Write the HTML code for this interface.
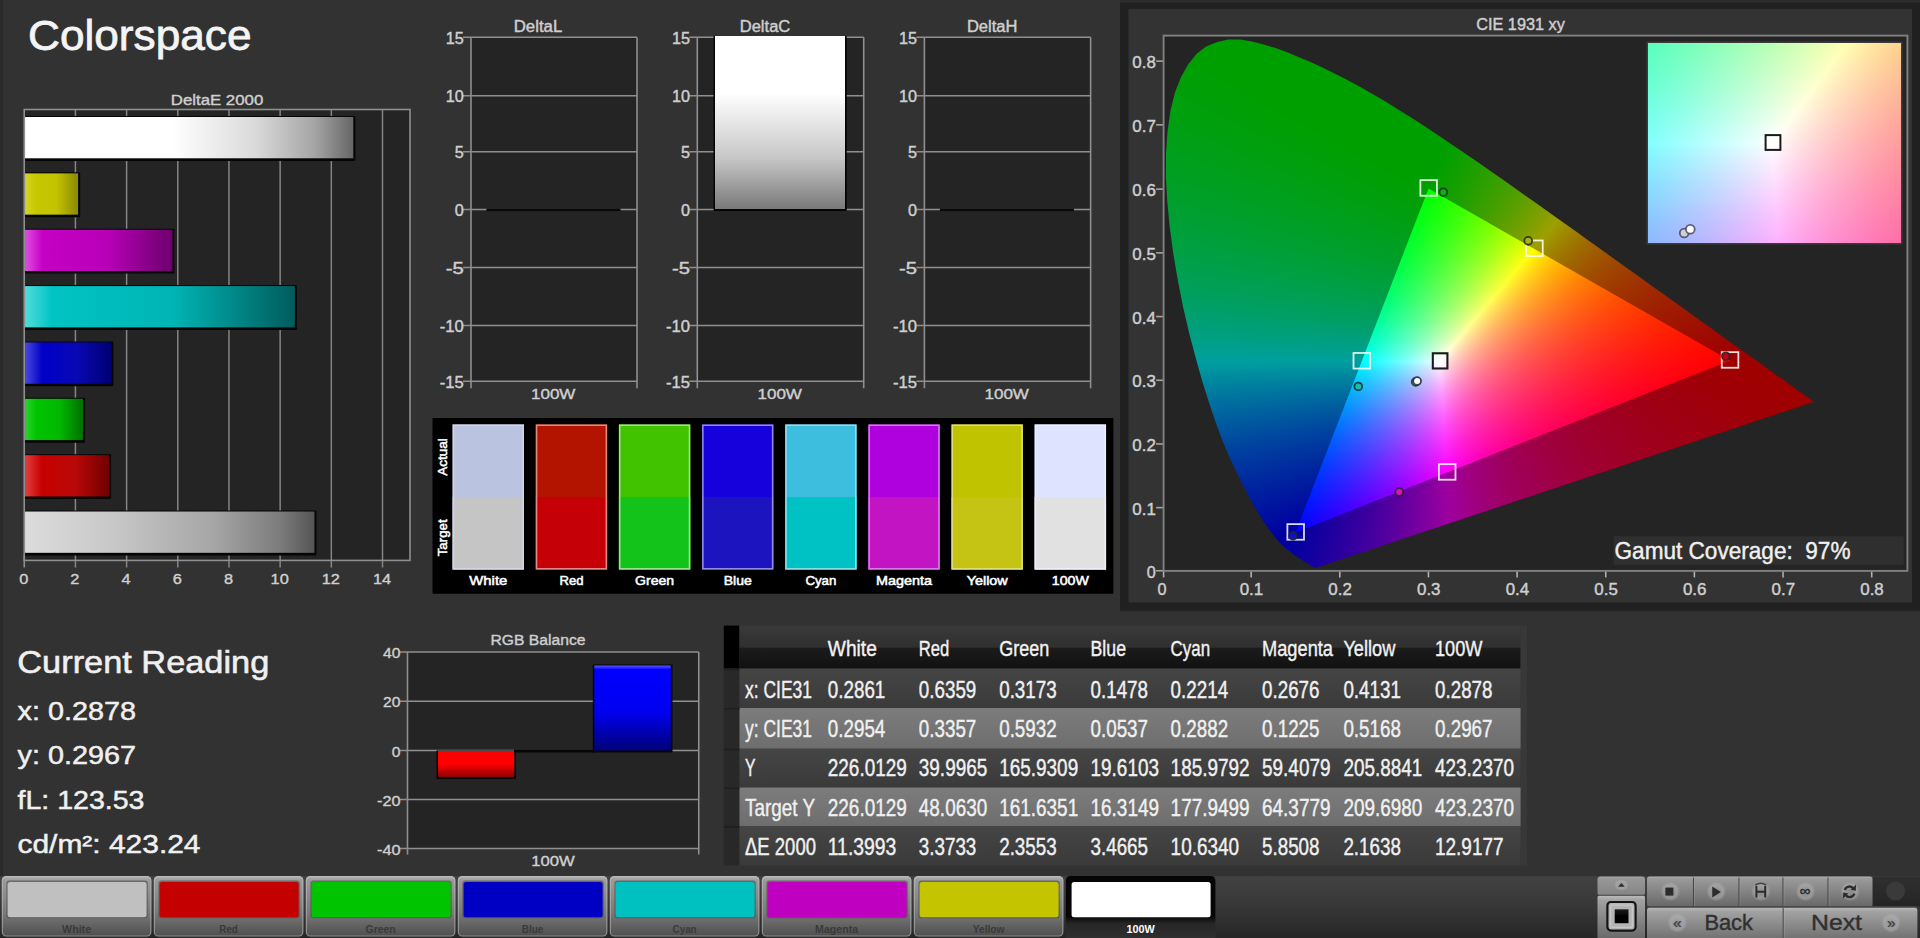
<!DOCTYPE html>
<html lang="en"><head><meta charset="utf-8"><title>Colorspace</title>
<style>
html,body{margin:0;padding:0;background:#323232;}
body{width:1920px;height:938px;overflow:hidden;position:relative;font-family:"Liberation Sans", sans-serif;}
svg{position:absolute;left:0;top:0;font-family:"Liberation Sans", sans-serif;}
.cie{position:absolute;background:#000;isolation:isolate;overflow:hidden}
.cie div{position:absolute;left:0;top:0;width:100%;height:100%;background-blend-mode:darken}
.cie .s{mix-blend-mode:screen}
#c1{left:1164px;top:37px;width:742px;height:533px;clip-path:polygon(152.8px 530.6px,152.8px 530.6px,152.7px 530.6px,152.6px 530.6px,152.4px 530.7px,152.3px 530.7px,152.1px 530.7px,152.0px 530.7px,151.8px 530.7px,151.5px 530.7px,151.2px 530.7px,150.8px 530.6px,150.4px 530.5px,150.1px 530.4px,149.8px 530.2px,149.5px 530.1px,149.1px 529.9px,148.7px 529.6px,148.2px 529.4px,147.7px 529.0px,147.1px 528.7px,146.5px 528.3px,145.8px 527.8px,145.0px 527.3px,144.2px 526.8px,143.4px 526.2px,142.4px 525.6px,141.3px 525.0px,140.1px 524.2px,138.8px 523.4px,137.3px 522.5px,135.8px 521.5px,134.1px 520.5px,132.4px 519.3px,130.4px 518.0px,128.4px 516.5px,126.2px 514.8px,123.8px 513.0px,121.4px 510.9px,118.6px 508.3px,115.5px 505.2px,112.2px 501.4px,108.5px 496.9px,104.6px 491.7px,100.3px 485.7px,95.7px 478.5px,90.6px 470.0px,85.3px 460.4px,79.4px 449.2px,73.1px 436.4px,66.3px 422.1px,59.4px 405.9px,52.5px 387.7px,45.6px 367.6px,38.7px 345.8px,32.0px 322.1px,25.3px 296.8px,19.3px 270.9px,14.0px 244.3px,9.4px 217.2px,5.8px 190.8px,3.3px 165.1px,1.9px 140.1px,2.0px 116.6px,3.5px 94.6px,6.4px 74.0px,10.8px 55.9px,16.9px 40.2px,24.4px 26.9px,33.0px 16.5px,42.6px 9.3px,53.3px 4.9px,64.4px 2.6px,75.8px 2.5px,87.8px 4.6px,99.7px 7.5px,111.7px 11.1px,123.8px 15.6px,135.6px 20.4px,147.1px 25.3px,158.4px 30.5px,169.5px 35.9px,180.5px 41.5px,191.3px 47.3px,202.0px 53.3px,212.8px 59.5px,223.5px 65.8px,234.1px 72.4px,244.7px 79.0px,255.3px 85.8px,265.9px 92.8px,276.4px 99.8px,287.0px 106.9px,297.5px 114.0px,308.1px 121.3px,318.7px 128.6px,329.3px 135.9px,339.8px 143.3px,350.3px 150.8px,360.8px 158.2px,371.3px 165.6px,381.8px 173.0px,392.2px 180.4px,402.5px 187.8px,412.8px 195.1px,423.0px 202.4px,433.0px 209.6px,443.0px 216.7px,452.8px 223.8px,462.5px 230.7px,472.1px 237.6px,481.5px 244.3px,490.7px 250.9px,499.7px 257.3px,508.4px 263.5px,516.9px 269.6px,525.1px 275.5px,533.0px 281.2px,540.4px 286.5px,547.5px 291.6px,554.3px 296.5px,560.9px 301.2px,567.2px 305.7px,573.1px 309.9px,578.7px 313.9px,583.9px 317.5px,588.7px 321.0px,593.3px 324.2px,597.5px 327.3px,601.4px 330.1px,605.0px 332.7px,608.4px 335.1px,611.5px 337.4px,614.4px 339.4px,617.1px 341.3px,619.6px 343.1px,621.9px 344.8px,624.0px 346.3px,626.1px 347.7px,628.0px 349.1px,629.8px 350.4px,631.5px 351.6px,633.0px 352.8px,634.5px 353.8px,635.9px 354.8px,637.2px 355.7px,638.4px 356.5px,639.4px 357.3px,640.4px 358.0px,641.3px 358.6px,642.1px 359.2px,642.8px 359.7px,643.5px 360.2px,644.1px 360.7px,644.7px 361.1px,645.1px 361.4px,645.6px 361.8px,646.2px 362.2px,646.9px 362.6px,647.4px 363.0px,647.9px 363.4px,648.3px 363.6px,648.7px 363.9px,649.1px 364.2px,649.5px 364.5px,649.8px 364.8px)}
#c1 .k0{background:conic-gradient(from 220.088deg at 131.47px 495.53px,#000000 0.00deg,#000000 161.05deg,#040000 161.52deg,#080000 161.99deg,#0d0000 162.46deg,#110000 162.94deg,#160000 163.41deg,#1a0000 163.88deg,#1f0000 164.36deg,#240000 164.83deg,#280000 165.30deg,#2d0000 165.77deg,#320000 166.25deg,#370000 166.72deg,#3d0000 167.19deg,#420000 167.66deg,#470000 168.14deg,#4d0000 168.61deg,#520000 169.08deg,#580000 169.55deg,#5e0000 170.03deg,#640000 170.50deg,#6a0000 170.97deg,#700000 171.45deg,#760000 171.92deg,#7d0000 172.39deg,#830000 172.86deg,#8a0000 173.34deg,#910000 173.81deg,#980000 174.28deg,#a00000 174.75deg,#a70000 175.23deg,#af0000 175.70deg,#b70000 176.17deg,#bf0000 176.64deg,#c70000 177.12deg,#d00000 177.59deg,#d80000 178.06deg,#e10000 178.53deg,#eb0000 179.01deg,#f40000 179.48deg,#fe0000 179.95deg,#ff0000 180.43deg,#ff0000 360.00deg),conic-gradient(from 356.269deg at 264.45px 151.55px,#ff0000 0.00deg,#ff0000 179.62deg,#fa0000 180.44deg,#f00000 181.25deg,#e60000 182.07deg,#dc0000 182.88deg,#d20000 183.70deg,#c90000 184.51deg,#c00000 185.32deg,#b70000 186.14deg,#ae0000 186.95deg,#a50000 187.77deg,#9c0000 188.58deg,#940000 189.40deg,#8b0000 190.21deg,#830000 191.02deg,#7b0000 191.84deg,#730000 192.65deg,#6a0000 193.47deg,#620000 194.28deg,#5a0000 195.10deg,#530000 195.91deg,#4b0000 196.72deg,#430000 197.54deg,#3b0000 198.35deg,#340000 199.17deg,#2c0000 199.98deg,#250000 200.80deg,#1d0000 201.61deg,#160000 202.42deg,#0f0000 203.24deg,#070000 204.05deg,#000000 204.87deg,#000000 360.00deg)}
#c1 .k1{background:conic-gradient(from 220.088deg at 131.47px 495.53px,#00ff00 0.00deg,#00ff00 179.95deg,#00f600 180.43deg,#00ed00 180.90deg,#00e400 181.37deg,#00db00 181.84deg,#00d300 182.32deg,#00cb00 182.79deg,#00c400 183.26deg,#00bc00 183.73deg,#00b500 184.21deg,#00af00 184.68deg,#00a800 185.15deg,#00a200 185.62deg,#009c00 186.10deg,#009600 186.57deg,#009100 187.04deg,#008b00 187.51deg,#008600 187.99deg,#008100 188.46deg,#007c00 188.93deg,#007700 189.41deg,#007300 189.88deg,#006e00 190.35deg,#006a00 190.82deg,#006500 191.30deg,#006100 191.77deg,#005d00 192.24deg,#005900 192.71deg,#005600 193.19deg,#005200 193.66deg,#004e00 194.13deg,#004b00 194.60deg,#004700 195.08deg,#004400 195.55deg,#004100 196.02deg,#003e00 196.49deg,#003b00 196.97deg,#003800 197.44deg,#003500 197.91deg,#003200 198.39deg,#002f00 198.86deg,#002c00 199.33deg,#002900 199.80deg,#002700 200.28deg,#002400 200.75deg,#002100 201.22deg,#001f00 201.69deg,#001c00 202.17deg,#001a00 202.64deg,#001800 203.11deg,#001500 203.58deg,#001300 204.06deg,#001100 204.53deg,#000f00 205.00deg,#000c00 205.48deg,#000a00 205.95deg,#000800 206.42deg,#000600 206.89deg,#000400 207.37deg,#000200 207.84deg,#000000 208.31deg,#000000 360.00deg),conic-gradient(from 89.874deg at 565.86px 323.54px,#000000 0.00deg,#000000 158.53deg,#000400 159.04deg,#000800 159.55deg,#000c00 160.06deg,#001000 160.58deg,#001500 161.09deg,#001900 161.60deg,#001d00 162.12deg,#002200 162.63deg,#002600 163.14deg,#002b00 163.66deg,#003000 164.17deg,#003400 164.68deg,#003900 165.20deg,#003e00 165.71deg,#004300 166.22deg,#004800 166.73deg,#004e00 167.25deg,#005300 167.76deg,#005800 168.27deg,#005e00 168.79deg,#006400 169.30deg,#006900 169.81deg,#006f00 170.33deg,#007500 170.84deg,#007c00 171.35deg,#008200 171.87deg,#008800 172.38deg,#008f00 172.89deg,#009600 173.41deg,#009d00 173.92deg,#00a400 174.43deg,#00ab00 174.94deg,#00b300 175.46deg,#00ba00 175.97deg,#00c200 176.48deg,#00ca00 177.00deg,#00d300 177.51deg,#00db00 178.02deg,#00e400 178.54deg,#00ed00 179.05deg,#00f700 179.56deg,#00ff00 180.08deg,#00ff00 360.00deg)}
#c1 .k2{background:conic-gradient(from 89.874deg at 565.86px 323.54px,#0000ff 0.00deg,#0000ff 179.56deg,#0000fe 180.08deg,#0000f4 180.59deg,#0000eb 181.10deg,#0000e2 181.61deg,#0000da 182.13deg,#0000d2 182.64deg,#0000ca 183.15deg,#0000c3 183.67deg,#0000bc 184.18deg,#0000b5 184.69deg,#0000ae 185.21deg,#0000a8 185.72deg,#0000a2 186.23deg,#00009c 186.75deg,#000096 187.26deg,#000090 187.77deg,#00008b 188.29deg,#000086 188.80deg,#000081 189.31deg,#00007c 189.82deg,#000077 190.34deg,#000072 190.85deg,#00006e 191.36deg,#000069 191.88deg,#000065 192.39deg,#000061 192.90deg,#00005d 193.42deg,#000059 193.93deg,#000055 194.44deg,#000051 194.96deg,#00004d 195.47deg,#00004a 195.98deg,#000046 196.49deg,#000043 197.01deg,#000040 197.52deg,#00003c 198.03deg,#000039 198.55deg,#000036 199.06deg,#000033 199.57deg,#000030 200.09deg,#00002d 200.60deg,#00002a 201.11deg,#000027 201.63deg,#000024 202.14deg,#000022 202.65deg,#00001f 203.17deg,#00001c 203.68deg,#00001a 204.19deg,#000017 204.70deg,#000015 205.22deg,#000012 205.73deg,#000010 206.24deg,#00000e 206.76deg,#00000b 207.27deg,#000009 207.78deg,#000007 208.30deg,#000004 208.81deg,#000002 209.32deg,#000000 209.84deg,#000000 360.00deg),conic-gradient(from 356.269deg at 264.45px 151.55px,#000000 0.00deg,#000000 123.44deg,#000002 124.26deg,#000004 125.07deg,#000006 125.88deg,#000007 126.70deg,#000009 127.51deg,#00000b 128.33deg,#00000d 129.14deg,#00000f 129.96deg,#000011 130.77deg,#000013 131.58deg,#000015 132.40deg,#000017 133.21deg,#000019 134.03deg,#00001b 134.84deg,#00001d 135.66deg,#00001f 136.47deg,#000021 137.28deg,#000023 138.10deg,#000026 138.91deg,#000028 139.73deg,#00002a 140.54deg,#00002c 141.35deg,#00002e 142.17deg,#000031 142.98deg,#000033 143.80deg,#000035 144.61deg,#000038 145.43deg,#00003a 146.24deg,#00003d 147.05deg,#00003f 147.87deg,#000042 148.68deg,#000045 149.50deg,#000047 150.31deg,#00004a 151.13deg,#00004d 151.94deg,#000050 152.75deg,#000053 153.57deg,#000056 154.38deg,#000059 155.20deg,#00005c 156.01deg,#00005f 156.83deg,#000062 157.64deg,#000066 158.45deg,#000069 159.27deg,#00006d 160.08deg,#000071 160.90deg,#000074 161.71deg,#000078 162.53deg,#00007c 163.34deg,#000081 164.15deg,#000085 164.97deg,#000089 165.78deg,#00008e 166.60deg,#000093 167.41deg,#000098 168.23deg,#00009d 169.04deg,#0000a2 169.85deg,#0000a8 170.67deg,#0000ae 171.48deg,#0000b4 172.30deg,#0000ba 173.11deg,#0000c1 173.93deg,#0000c8 174.74deg,#0000cf 175.55deg,#0000d7 176.37deg,#0000df 177.18deg,#0000e8 178.00deg,#0000f1 178.81deg,#0000fa 179.62deg,#0000ff 180.44deg,#0000ff 360.00deg)}
#c1 .dk{background:rgba(0,0,0,0.375);clip-path:path(evenodd,"M0 0H742V533H0Z M565.9 323.5L264.5 151.6L131.5 495.5Z")}
#c2{left:1648.3px;top:43.0px;width:252.5px;height:200.3px;box-shadow:0 0 0 1.5px #3c3c3c}
#c2 .k0{background:conic-gradient(from 216.810deg at -415.63px 821.50px,#000000 0.00deg,#000000 162.16deg,#010000 162.28deg,#020000 162.39deg,#030000 162.51deg,#050000 162.63deg,#060000 162.75deg,#070000 162.86deg,#080000 162.98deg,#090000 163.10deg,#0a0000 163.22deg,#0c0000 163.33deg,#0d0000 163.45deg,#0e0000 163.57deg,#0f0000 163.69deg,#100000 163.80deg,#120000 163.92deg,#130000 164.04deg,#140000 164.16deg,#150000 164.27deg,#160000 164.39deg,#180000 164.51deg,#190000 164.63deg,#1a0000 164.74deg,#1b0000 164.86deg,#1d0000 164.98deg,#1e0000 165.10deg,#1f0000 165.21deg,#200000 165.33deg,#220000 165.45deg,#230000 165.57deg,#240000 165.68deg,#260000 165.80deg,#270000 165.92deg,#280000 166.04deg,#290000 166.15deg,#2b0000 166.27deg,#2c0000 166.39deg,#2d0000 166.51deg,#2f0000 166.63deg,#300000 166.74deg,#310000 166.86deg,#330000 166.98deg,#340000 167.10deg,#350000 167.21deg,#370000 167.33deg,#380000 167.45deg,#3a0000 167.57deg,#3b0000 167.68deg,#3c0000 167.80deg,#3e0000 167.92deg,#3f0000 168.04deg,#410000 168.15deg,#420000 168.27deg,#430000 168.39deg,#450000 168.51deg,#460000 168.62deg,#480000 168.74deg,#490000 168.86deg,#4b0000 168.98deg,#4c0000 169.09deg,#4e0000 169.21deg,#4f0000 169.33deg,#510000 169.45deg,#520000 169.56deg,#540000 169.68deg,#550000 169.80deg,#570000 169.92deg,#580000 170.03deg,#5a0000 170.15deg,#5b0000 170.27deg,#5d0000 170.39deg,#5e0000 170.50deg,#600000 170.62deg,#610000 170.74deg,#630000 170.86deg,#650000 170.98deg,#660000 171.09deg,#680000 171.21deg,#690000 171.33deg,#6b0000 171.45deg,#6d0000 171.56deg,#6e0000 171.68deg,#700000 171.80deg,#720000 171.92deg,#730000 172.03deg,#750000 172.15deg,#770000 172.27deg,#780000 172.39deg,#7a0000 172.50deg,#7c0000 172.62deg,#7d0000 172.74deg,#7f0000 172.86deg,#810000 172.97deg,#830000 173.09deg,#840000 173.21deg,#860000 173.33deg,#880000 173.44deg,#8a0000 173.56deg,#8c0000 173.68deg,#8d0000 173.80deg,#8f0000 173.91deg,#910000 174.03deg,#930000 174.15deg,#950000 174.27deg,#970000 174.38deg,#980000 174.50deg,#9a0000 174.62deg,#9c0000 174.74deg,#9e0000 174.85deg,#a00000 174.97deg,#a20000 175.09deg,#a40000 175.21deg,#a60000 175.33deg,#a80000 175.44deg,#aa0000 175.56deg,#ac0000 175.68deg,#ae0000 175.80deg,#b00000 175.91deg,#b20000 176.03deg,#b40000 176.15deg,#b60000 176.27deg,#b80000 176.38deg,#ba0000 176.50deg,#bc0000 176.62deg,#be0000 176.74deg,#c10000 176.85deg,#c30000 176.97deg,#c50000 177.09deg,#c70000 177.21deg,#c90000 177.32deg,#cb0000 177.44deg,#ce0000 177.56deg,#d00000 177.68deg,#d20000 177.79deg,#d40000 177.91deg,#d70000 178.03deg,#d90000 178.15deg,#db0000 178.26deg,#dd0000 178.38deg,#e00000 178.50deg,#e20000 178.62deg,#e40000 178.73deg,#e70000 178.85deg,#e90000 178.97deg,#ec0000 179.09deg,#ee0000 179.20deg,#f10000 179.32deg,#f30000 179.44deg,#f50000 179.56deg,#f80000 179.68deg,#fb0000 179.79deg,#fd0000 179.91deg,#ff0000 180.03deg,#ff0000 360.00deg),conic-gradient(from 356.681deg at 82.52px -627.86px,#ff0000 0.00deg,#ff0000 179.98deg,#fd0000 180.17deg,#fa0000 180.36deg,#f70000 180.55deg,#f50000 180.74deg,#f20000 180.93deg,#ef0000 181.12deg,#ed0000 181.31deg,#ea0000 181.50deg,#e80000 181.69deg,#e50000 181.88deg,#e30000 182.07deg,#e00000 182.26deg,#dd0000 182.45deg,#db0000 182.65deg,#d80000 182.84deg,#d60000 183.03deg,#d30000 183.22deg,#d10000 183.41deg,#ce0000 183.60deg,#cc0000 183.79deg,#ca0000 183.98deg,#c70000 184.17deg,#c50000 184.36deg,#c20000 184.55deg,#c00000 184.74deg,#bd0000 184.93deg,#bb0000 185.12deg,#b90000 185.32deg,#b60000 185.51deg,#b40000 185.70deg,#b20000 185.89deg,#af0000 186.08deg,#ad0000 186.27deg,#ab0000 186.46deg,#a80000 186.65deg,#a60000 186.84deg,#a40000 187.03deg,#a10000 187.22deg,#9f0000 187.41deg,#9d0000 187.60deg,#9a0000 187.79deg,#980000 187.98deg,#960000 188.18deg,#940000 188.37deg,#910000 188.56deg,#8f0000 188.75deg,#8d0000 188.94deg,#8b0000 189.13deg,#890000 189.32deg,#860000 189.51deg,#840000 189.70deg,#820000 189.89deg,#800000 190.08deg,#7e0000 190.27deg,#7c0000 190.46deg,#790000 190.65deg,#770000 190.85deg,#750000 191.04deg,#730000 191.23deg,#710000 191.42deg,#6f0000 191.61deg,#6d0000 191.80deg,#6a0000 191.99deg,#680000 192.18deg,#660000 192.37deg,#640000 192.56deg,#620000 192.75deg,#600000 192.94deg,#5e0000 193.13deg,#5c0000 193.32deg,#5a0000 193.51deg,#580000 193.71deg,#560000 193.90deg,#540000 194.09deg,#520000 194.28deg,#500000 194.47deg,#4e0000 194.66deg,#4b0000 194.85deg,#490000 195.04deg,#470000 195.23deg,#450000 195.42deg,#430000 195.61deg,#410000 195.80deg,#3f0000 195.99deg,#3d0000 196.18deg,#3b0000 196.38deg,#390000 196.57deg,#380000 196.76deg,#360000 196.95deg,#340000 197.14deg,#320000 197.33deg,#300000 197.52deg,#2e0000 197.71deg,#2c0000 197.90deg,#2a0000 198.09deg,#280000 198.28deg,#260000 198.47deg,#240000 198.66deg,#220000 198.85deg,#200000 199.04deg,#1e0000 199.24deg,#1c0000 199.43deg,#1a0000 199.62deg,#180000 199.81deg,#170000 200.00deg,#150000 200.19deg,#130000 200.38deg,#110000 200.57deg,#0f0000 200.76deg,#0d0000 200.95deg,#0b0000 201.14deg,#090000 201.33deg,#070000 201.52deg,#060000 201.71deg,#040000 201.91deg,#020000 202.10deg,#000000 202.29deg,#000000 360.00deg)}
#c2 .k1{background:conic-gradient(from 216.810deg at -415.63px 821.50px,#00ff00 0.00deg,#00ff00 179.91deg,#00fe00 180.03deg,#00fc00 180.15deg,#00f900 180.26deg,#00f700 180.38deg,#00f400 180.50deg,#00f200 180.62deg,#00f000 180.73deg,#00ed00 180.85deg,#00eb00 180.97deg,#00e900 181.09deg,#00e600 181.20deg,#00e400 181.32deg,#00e200 181.44deg,#00e000 181.56deg,#00de00 181.67deg,#00db00 181.79deg,#00d900 181.91deg,#00d700 182.03deg,#00d500 182.14deg,#00d300 182.26deg,#00d100 182.38deg,#00cf00 182.50deg,#00cd00 182.61deg,#00cb00 182.73deg,#00c900 182.85deg,#00c700 182.97deg,#00c500 183.08deg,#00c300 183.20deg,#00c200 183.32deg,#00c000 183.44deg,#00be00 183.55deg,#00bc00 183.67deg,#00ba00 183.79deg,#00b900 183.91deg,#00b700 184.03deg,#00b500 184.14deg,#00b300 184.26deg,#00b200 184.38deg,#00b000 184.50deg,#00ae00 184.61deg,#00ad00 184.73deg,#00ab00 184.85deg,#00aa00 184.97deg,#00a800 185.08deg,#00a600 185.20deg,#00a500 185.32deg,#00a300 185.44deg,#00a200 185.55deg,#00a000 185.67deg,#009f00 185.79deg,#009d00 185.91deg,#009c00 186.02deg,#009a00 186.14deg,#009900 186.26deg,#009700 186.38deg,#009600 186.49deg,#009500 186.61deg,#009300 186.73deg,#009200 186.85deg,#009000 186.96deg,#008f00 187.08deg,#008e00 187.20deg,#008c00 187.32deg,#008b00 187.43deg,#008a00 187.55deg,#008800 187.67deg,#008700 187.79deg,#008600 187.90deg,#008500 188.02deg,#008300 188.14deg,#008200 188.26deg,#008100 188.38deg,#008000 188.49deg,#007e00 188.61deg,#007d00 188.73deg,#007c00 188.85deg,#007b00 188.96deg,#007a00 189.08deg,#007800 189.20deg,#007700 189.32deg,#007600 189.43deg,#007500 189.55deg,#007400 189.67deg,#007300 189.79deg,#007200 189.90deg,#007100 190.02deg,#006f00 190.14deg,#006e00 190.26deg,#006d00 190.37deg,#006c00 190.49deg,#006b00 190.61deg,#006a00 190.73deg,#006900 190.84deg,#006800 190.96deg,#006700 191.08deg,#006600 191.20deg,#006500 191.31deg,#006400 191.43deg,#006300 191.55deg,#006200 191.67deg,#006100 191.78deg,#006000 191.90deg,#005f00 192.02deg,#005e00 192.14deg,#005d00 192.25deg,#005c00 192.37deg,#005b00 192.49deg,#005a00 192.61deg,#005900 192.73deg,#005800 192.84deg,#005700 192.96deg,#005700 193.08deg,#005600 193.20deg,#005500 193.31deg,#005400 193.43deg,#005300 193.55deg,#005200 193.67deg,#005100 193.78deg,#005000 193.90deg,#004f00 194.02deg,#004f00 194.14deg,#004e00 194.25deg,#004d00 194.37deg,#004c00 194.49deg,#004b00 194.61deg,#004a00 194.72deg,#004a00 194.84deg,#004900 194.96deg,#004800 195.08deg,#004700 195.19deg,#004600 195.31deg,#004500 195.43deg,#004500 195.55deg,#004400 195.66deg,#004300 195.78deg,#004200 195.90deg,#004200 196.02deg,#004100 196.13deg,#004000 196.25deg,#003f00 196.37deg,#003e00 196.49deg,#003e00 196.61deg,#003d00 196.72deg,#003c00 196.84deg,#003b00 196.96deg,#003b00 197.08deg,#003a00 197.19deg,#003900 197.31deg,#003900 197.43deg,#003800 197.55deg,#003700 197.66deg,#003600 197.78deg,#003600 197.90deg,#003500 198.02deg,#003400 198.13deg,#003400 198.25deg,#003300 198.37deg,#003200 198.49deg,#003200 198.60deg,#003100 198.72deg,#003000 198.84deg,#002f00 198.96deg,#002f00 199.07deg,#002e00 199.19deg,#002e00 199.31deg,#002d00 199.43deg,#002c00 199.54deg,#002c00 199.66deg,#002b00 199.78deg,#002a00 199.90deg,#002a00 200.01deg,#002900 200.13deg,#002800 200.25deg,#002800 200.37deg,#002700 200.48deg,#002600 200.60deg,#002600 200.72deg,#002500 200.84deg,#002500 200.96deg,#002400 201.07deg,#002300 201.19deg,#002300 201.31deg,#002200 201.43deg,#002200 201.54deg,#002100 201.66deg,#002000 201.78deg,#002000 201.90deg,#001f00 202.01deg,#001f00 202.13deg,#001e00 202.25deg,#001d00 202.37deg,#001d00 202.48deg,#001c00 202.60deg,#001c00 202.72deg,#001b00 202.84deg,#001b00 202.95deg,#001a00 203.07deg,#001900 203.19deg,#001900 203.31deg,#001800 203.42deg,#001800 203.54deg,#001700 203.66deg,#001700 203.78deg,#001600 203.89deg,#001600 204.01deg,#001500 204.13deg,#001500 204.25deg,#001400 204.36deg,#001400 204.48deg,#001300 204.60deg,#001200 204.72deg,#001200 204.83deg,#001100 204.95deg,#001100 205.07deg,#001000 205.19deg,#001000 205.31deg,#000f00 205.42deg,#000f00 205.54deg,#000e00 205.66deg,#000e00 205.78deg,#000d00 205.89deg,#000d00 206.01deg,#000c00 206.13deg,#000c00 206.25deg,#000b00 206.36deg,#000b00 206.48deg,#000a00 206.60deg,#000a00 206.72deg,#000900 206.83deg,#000900 206.95deg,#000800 207.07deg,#000800 207.19deg,#000700 207.30deg,#000700 207.42deg,#000600 207.54deg,#000600 207.77deg,#000500 207.89deg,#000500 208.01deg,#000400 208.13deg,#000400 208.24deg,#000300 208.36deg,#000300 208.48deg,#000200 208.60deg,#000200 208.71deg,#000100 208.83deg,#000100 208.95deg,#000000 209.07deg,#000000 360.00deg),conic-gradient(from 89.859deg at 1211.66px 96.82px,#000000 0.00deg,#000000 156.14deg,#000100 156.28deg,#000200 156.42deg,#000300 156.56deg,#000400 156.70deg,#000500 156.85deg,#000600 156.99deg,#000700 157.13deg,#000800 157.27deg,#000900 157.41deg,#000a00 157.55deg,#000b00 157.70deg,#000c00 157.84deg,#000d00 157.98deg,#000e00 158.12deg,#001000 158.26deg,#001100 158.40deg,#001200 158.55deg,#001300 158.69deg,#001400 158.83deg,#001500 158.97deg,#001600 159.11deg,#001700 159.26deg,#001800 159.40deg,#001900 159.54deg,#001a00 159.68deg,#001c00 159.82deg,#001d00 159.96deg,#001e00 160.11deg,#001f00 160.25deg,#002000 160.39deg,#002100 160.53deg,#002200 160.67deg,#002300 160.81deg,#002400 160.96deg,#002600 161.10deg,#002700 161.24deg,#002800 161.38deg,#002900 161.52deg,#002a00 161.66deg,#002b00 161.81deg,#002d00 161.95deg,#002e00 162.09deg,#002f00 162.23deg,#003000 162.37deg,#003100 162.52deg,#003300 162.66deg,#003400 162.80deg,#003500 162.94deg,#003600 163.08deg,#003700 163.22deg,#003900 163.37deg,#003a00 163.51deg,#003b00 163.65deg,#003c00 163.79deg,#003e00 163.93deg,#003f00 164.07deg,#004000 164.22deg,#004100 164.36deg,#004300 164.50deg,#004400 164.64deg,#004500 164.78deg,#004600 164.92deg,#004800 165.07deg,#004900 165.21deg,#004a00 165.35deg,#004c00 165.49deg,#004d00 165.63deg,#004e00 165.78deg,#004f00 165.92deg,#005100 166.06deg,#005200 166.20deg,#005300 166.34deg,#005500 166.48deg,#005600 166.63deg,#005800 166.77deg,#005900 166.91deg,#005a00 167.05deg,#005c00 167.19deg,#005d00 167.33deg,#005e00 167.48deg,#006000 167.62deg,#006100 167.76deg,#006300 167.90deg,#006400 168.04deg,#006600 168.18deg,#006700 168.33deg,#006800 168.47deg,#006a00 168.61deg,#006b00 168.75deg,#006d00 168.89deg,#006e00 169.04deg,#007000 169.18deg,#007100 169.32deg,#007300 169.46deg,#007400 169.60deg,#007600 169.74deg,#007700 169.89deg,#007900 170.03deg,#007a00 170.17deg,#007c00 170.31deg,#007d00 170.45deg,#007f00 170.59deg,#008000 170.74deg,#008200 170.88deg,#008400 171.02deg,#008500 171.16deg,#008700 171.30deg,#008800 171.44deg,#008a00 171.59deg,#008c00 171.73deg,#008d00 171.87deg,#008f00 172.01deg,#009100 172.15deg,#009200 172.30deg,#009400 172.44deg,#009600 172.58deg,#009700 172.72deg,#009900 172.86deg,#009b00 173.00deg,#009d00 173.15deg,#009e00 173.29deg,#00a000 173.43deg,#00a200 173.57deg,#00a400 173.71deg,#00a500 173.85deg,#00a700 174.00deg,#00a900 174.14deg,#00ab00 174.28deg,#00ad00 174.42deg,#00ae00 174.56deg,#00b000 174.70deg,#00b200 174.85deg,#00b400 174.99deg,#00b600 175.13deg,#00b800 175.27deg,#00ba00 175.41deg,#00bc00 175.56deg,#00be00 175.70deg,#00bf00 175.84deg,#00c100 175.98deg,#00c300 176.12deg,#00c500 176.26deg,#00c700 176.41deg,#00c900 176.55deg,#00cb00 176.69deg,#00cd00 176.83deg,#00d000 176.97deg,#00d200 177.11deg,#00d400 177.26deg,#00d600 177.40deg,#00d800 177.54deg,#00da00 177.68deg,#00dc00 177.82deg,#00de00 177.97deg,#00e000 178.11deg,#00e300 178.25deg,#00e500 178.39deg,#00e700 178.53deg,#00e900 178.67deg,#00ec00 178.82deg,#00ee00 178.96deg,#00f000 179.10deg,#00f200 179.24deg,#00f500 179.38deg,#00f700 179.52deg,#00f900 179.67deg,#00fc00 179.81deg,#00fe00 179.95deg,#00ff00 180.09deg,#00ff00 360.00deg)}
#c2 .k2{background:conic-gradient(from 89.859deg at 1211.66px 96.82px,#0000ff 0.00deg,#0000ff 179.95deg,#0000fd 180.09deg,#0000fb 180.23deg,#0000f9 180.37deg,#0000f6 180.52deg,#0000f4 180.66deg,#0000f2 180.80deg,#0000f0 180.94deg,#0000ed 181.08deg,#0000eb 181.23deg,#0000e9 181.37deg,#0000e7 181.51deg,#0000e5 181.65deg,#0000e3 181.79deg,#0000e1 181.93deg,#0000de 182.08deg,#0000dc 182.22deg,#0000da 182.36deg,#0000d8 182.50deg,#0000d6 182.64deg,#0000d4 182.78deg,#0000d2 182.93deg,#0000d1 183.07deg,#0000cf 183.21deg,#0000cd 183.35deg,#0000cb 183.49deg,#0000c9 183.63deg,#0000c7 183.78deg,#0000c5 183.92deg,#0000c4 184.06deg,#0000c2 184.20deg,#0000c0 184.34deg,#0000be 184.49deg,#0000bd 184.63deg,#0000bb 184.77deg,#0000b9 184.91deg,#0000b7 185.05deg,#0000b6 185.19deg,#0000b4 185.34deg,#0000b2 185.48deg,#0000b1 185.62deg,#0000af 185.76deg,#0000ae 185.90deg,#0000ac 186.04deg,#0000aa 186.19deg,#0000a9 186.33deg,#0000a7 186.47deg,#0000a6 186.61deg,#0000a4 186.75deg,#0000a3 186.89deg,#0000a1 187.04deg,#0000a0 187.18deg,#00009e 187.32deg,#00009d 187.46deg,#00009b 187.60deg,#00009a 187.75deg,#000099 187.89deg,#000097 188.03deg,#000096 188.17deg,#000094 188.31deg,#000093 188.45deg,#000092 188.60deg,#000090 188.74deg,#00008f 188.88deg,#00008d 189.02deg,#00008c 189.16deg,#00008b 189.30deg,#00008a 189.45deg,#000088 189.59deg,#000087 189.73deg,#000086 189.87deg,#000084 190.01deg,#000083 190.15deg,#000082 190.30deg,#000081 190.44deg,#00007f 190.58deg,#00007e 190.72deg,#00007d 190.86deg,#00007c 191.01deg,#00007b 191.15deg,#000079 191.29deg,#000078 191.43deg,#000077 191.57deg,#000076 191.71deg,#000075 191.86deg,#000074 192.00deg,#000072 192.14deg,#000071 192.28deg,#000070 192.42deg,#00006f 192.56deg,#00006e 192.71deg,#00006d 192.85deg,#00006c 192.99deg,#00006b 193.13deg,#00006a 193.27deg,#000068 193.41deg,#000067 193.56deg,#000066 193.70deg,#000065 193.84deg,#000064 193.98deg,#000063 194.12deg,#000062 194.27deg,#000061 194.41deg,#000060 194.55deg,#00005f 194.69deg,#00005e 194.83deg,#00005d 194.97deg,#00005c 195.12deg,#00005b 195.26deg,#00005a 195.40deg,#000059 195.54deg,#000058 195.68deg,#000057 195.82deg,#000056 195.97deg,#000055 196.11deg,#000054 196.25deg,#000053 196.39deg,#000052 196.53deg,#000051 196.68deg,#000051 196.82deg,#000050 196.96deg,#00004f 197.10deg,#00004e 197.24deg,#00004d 197.38deg,#00004c 197.53deg,#00004b 197.67deg,#00004a 197.81deg,#000049 197.95deg,#000048 198.09deg,#000048 198.23deg,#000047 198.38deg,#000046 198.52deg,#000045 198.66deg,#000044 198.80deg,#000043 198.94deg,#000042 199.08deg,#000042 199.23deg,#000041 199.37deg,#000040 199.51deg,#00003f 199.65deg,#00003e 199.79deg,#00003d 199.94deg,#00003d 200.08deg,#00003c 200.22deg,#00003b 200.36deg,#00003a 200.50deg,#000039 200.64deg,#000039 200.79deg,#000038 200.93deg,#000037 201.07deg,#000036 201.21deg,#000035 201.35deg,#000035 201.49deg,#000034 201.64deg,#000033 201.78deg,#000032 201.92deg,#000032 202.06deg,#000031 202.20deg,#000030 202.34deg,#00002f 202.49deg,#00002e 202.63deg,#00002e 202.77deg,#00002d 202.91deg,#00002c 203.05deg,#00002c 203.20deg,#00002b 203.34deg,#00002a 203.48deg,#000029 203.62deg,#000029 203.76deg,#000028 203.90deg,#000027 204.05deg,#000026 204.19deg,#000026 204.33deg,#000025 204.47deg,#000024 204.61deg,#000024 204.75deg,#000023 204.90deg,#000022 205.04deg,#000022 205.18deg,#000021 205.32deg,#000020 205.46deg,#000020 205.60deg,#00001f 205.75deg,#00001e 205.89deg,#00001d 206.03deg,#00001d 206.17deg,#00001c 206.31deg,#00001b 206.46deg,#00001b 206.60deg,#00001a 206.74deg,#000019 206.88deg,#000019 207.02deg,#000018 207.16deg,#000018 207.31deg,#000017 207.45deg,#000016 207.59deg,#000016 207.73deg,#000015 207.87deg,#000014 208.01deg,#000014 208.16deg,#000013 208.30deg,#000012 208.44deg,#000012 208.58deg,#000011 208.72deg,#000011 208.86deg,#000010 209.01deg,#00000f 209.15deg,#00000f 209.29deg,#00000e 209.43deg,#00000d 209.57deg,#00000d 209.72deg,#00000c 209.86deg,#00000c 210.00deg,#00000b 210.14deg,#00000a 210.28deg,#00000a 210.42deg,#000009 210.57deg,#000009 210.71deg,#000008 210.85deg,#000007 210.99deg,#000007 211.13deg,#000006 211.27deg,#000006 211.42deg,#000005 211.56deg,#000005 211.70deg,#000004 211.84deg,#000003 211.98deg,#000003 212.13deg,#000002 212.27deg,#000002 212.41deg,#000001 212.55deg,#000001 212.69deg,#000000 212.83deg,#000000 360.00deg),conic-gradient(from 356.681deg at 82.52px -627.86px,#000000 0.00deg,#000000 126.20deg,#000001 126.39deg,#000001 126.58deg,#000002 126.77deg,#000002 127.16deg,#000003 127.35deg,#000003 127.54deg,#000004 127.73deg,#000004 127.92deg,#000005 128.11deg,#000005 128.49deg,#000006 128.68deg,#000006 128.87deg,#000007 129.06deg,#000007 129.44deg,#000008 129.63deg,#000008 129.82deg,#000009 130.02deg,#000009 130.21deg,#00000a 130.40deg,#00000a 130.78deg,#00000b 130.97deg,#00000b 131.16deg,#00000c 131.35deg,#00000c 131.54deg,#00000d 131.73deg,#00000d 131.92deg,#00000e 132.11deg,#00000e 132.49deg,#00000f 132.69deg,#00000f 132.88deg,#000010 133.07deg,#000010 133.26deg,#000011 133.45deg,#000011 133.83deg,#000012 134.02deg,#000012 134.21deg,#000013 134.40deg,#000013 134.59deg,#000014 134.78deg,#000014 134.97deg,#000015 135.16deg,#000015 135.35deg,#000016 135.55deg,#000016 135.93deg,#000017 136.12deg,#000017 136.31deg,#000018 136.50deg,#000018 136.69deg,#000019 136.88deg,#000019 137.07deg,#00001a 137.26deg,#00001a 137.45deg,#00001b 137.64deg,#00001b 137.83deg,#00001c 138.02deg,#00001c 138.22deg,#00001d 138.41deg,#00001d 138.60deg,#00001e 138.79deg,#00001e 138.98deg,#00001f 139.17deg,#00001f 139.55deg,#000020 139.74deg,#000020 139.93deg,#000021 140.12deg,#000021 140.31deg,#000022 140.50deg,#000022 140.69deg,#000023 140.88deg,#000023 141.08deg,#000024 141.27deg,#000024 141.46deg,#000025 141.65deg,#000025 141.84deg,#000026 142.03deg,#000027 142.22deg,#000027 142.41deg,#000028 142.60deg,#000028 142.79deg,#000029 142.98deg,#000029 143.17deg,#00002a 143.36deg,#00002a 143.55deg,#00002b 143.75deg,#00002b 143.94deg,#00002c 144.13deg,#00002c 144.32deg,#00002d 144.51deg,#00002d 144.70deg,#00002e 144.89deg,#00002e 145.08deg,#00002f 145.27deg,#000030 145.46deg,#000030 145.65deg,#000031 145.84deg,#000031 146.03deg,#000032 146.22deg,#000032 146.41deg,#000033 146.61deg,#000033 146.80deg,#000034 146.99deg,#000035 147.18deg,#000035 147.37deg,#000036 147.56deg,#000036 147.75deg,#000037 147.94deg,#000038 148.13deg,#000038 148.32deg,#000039 148.51deg,#000039 148.70deg,#00003a 148.89deg,#00003b 149.08deg,#00003b 149.27deg,#00003c 149.47deg,#00003c 149.66deg,#00003d 149.85deg,#00003e 150.04deg,#00003e 150.23deg,#00003f 150.42deg,#00003f 150.61deg,#000040 150.80deg,#000041 150.99deg,#000041 151.18deg,#000042 151.37deg,#000043 151.56deg,#000043 151.75deg,#000044 151.94deg,#000045 152.14deg,#000045 152.33deg,#000046 152.52deg,#000047 152.71deg,#000047 152.90deg,#000048 153.09deg,#000049 153.28deg,#000049 153.47deg,#00004a 153.66deg,#00004b 153.85deg,#00004b 154.04deg,#00004c 154.23deg,#00004d 154.42deg,#00004d 154.61deg,#00004e 154.80deg,#00004f 155.00deg,#000050 155.19deg,#000050 155.38deg,#000051 155.57deg,#000052 155.76deg,#000052 155.95deg,#000053 156.14deg,#000054 156.33deg,#000055 156.52deg,#000055 156.71deg,#000056 156.90deg,#000057 157.09deg,#000058 157.28deg,#000059 157.47deg,#000059 157.67deg,#00005a 157.86deg,#00005b 158.05deg,#00005c 158.24deg,#00005c 158.43deg,#00005d 158.62deg,#00005e 158.81deg,#00005f 159.00deg,#000060 159.19deg,#000061 159.38deg,#000061 159.57deg,#000062 159.76deg,#000063 159.95deg,#000064 160.14deg,#000065 160.33deg,#000066 160.53deg,#000067 160.72deg,#000067 160.91deg,#000068 161.10deg,#000069 161.29deg,#00006a 161.48deg,#00006b 161.67deg,#00006c 161.86deg,#00006d 162.05deg,#00006e 162.24deg,#00006f 162.43deg,#000070 162.62deg,#000071 162.81deg,#000072 163.00deg,#000073 163.20deg,#000074 163.39deg,#000075 163.58deg,#000076 163.77deg,#000077 163.96deg,#000078 164.15deg,#000079 164.34deg,#00007a 164.53deg,#00007b 164.72deg,#00007c 164.91deg,#00007d 165.10deg,#00007e 165.29deg,#00007f 165.48deg,#000080 165.67deg,#000081 165.86deg,#000082 166.06deg,#000083 166.25deg,#000084 166.44deg,#000086 166.63deg,#000087 166.82deg,#000088 167.01deg,#000089 167.20deg,#00008a 167.39deg,#00008b 167.58deg,#00008d 167.77deg,#00008e 167.96deg,#00008f 168.15deg,#000090 168.34deg,#000091 168.53deg,#000093 168.73deg,#000094 168.92deg,#000095 169.11deg,#000097 169.30deg,#000098 169.49deg,#000099 169.68deg,#00009b 169.87deg,#00009c 170.06deg,#00009d 170.25deg,#00009f 170.44deg,#0000a0 170.63deg,#0000a1 170.82deg,#0000a3 171.01deg,#0000a4 171.20deg,#0000a6 171.39deg,#0000a7 171.59deg,#0000a9 171.78deg,#0000aa 171.97deg,#0000ac 172.16deg,#0000ad 172.35deg,#0000af 172.54deg,#0000b0 172.73deg,#0000b2 172.92deg,#0000b4 173.11deg,#0000b5 173.30deg,#0000b7 173.49deg,#0000b9 173.68deg,#0000ba 173.87deg,#0000bc 174.06deg,#0000be 174.26deg,#0000c0 174.45deg,#0000c1 174.64deg,#0000c3 174.83deg,#0000c5 175.02deg,#0000c7 175.21deg,#0000c9 175.40deg,#0000cb 175.59deg,#0000cd 175.78deg,#0000ce 175.97deg,#0000d0 176.16deg,#0000d2 176.35deg,#0000d4 176.54deg,#0000d7 176.73deg,#0000d9 176.92deg,#0000db 177.12deg,#0000dd 177.31deg,#0000df 177.50deg,#0000e1 177.69deg,#0000e4 177.88deg,#0000e6 178.07deg,#0000e8 178.26deg,#0000eb 178.45deg,#0000ed 178.64deg,#0000ef 178.83deg,#0000f2 179.02deg,#0000f4 179.21deg,#0000f7 179.40deg,#0000f9 179.59deg,#0000fc 179.79deg,#0000ff 179.98deg,#0000ff 360.00deg)}
</style></head>
<body>
<svg width="1920" height="938" viewBox="0 0 1920 938">
<defs><linearGradient id="g1" x1="0" y1="0" x2="0" y2="1"><stop offset="0" stop-color="#424242"/><stop offset="0.45" stop-color="#383838"/><stop offset="1" stop-color="#272727"/></linearGradient>
<linearGradient id="g2" x1="0" y1="0" x2="1" y2="0"><stop offset="0" stop-color="#ffffff"/><stop offset="0.45" stop-color="#ffffff"/><stop offset="0.7" stop-color="#dadada"/><stop offset="0.88" stop-color="#a6a6a6"/><stop offset="1" stop-color="#666666"/></linearGradient>
<linearGradient id="g3" x1="0" y1="0" x2="1" y2="0"><stop offset="0" stop-color="#d4d428"/><stop offset="0.2" stop-color="#c8c800"/><stop offset="0.6" stop-color="#c2c200"/><stop offset="1" stop-color="#8a8a00"/></linearGradient>
<linearGradient id="g4" x1="0" y1="0" x2="1" y2="0"><stop offset="0" stop-color="#e050e0"/><stop offset="0.12" stop-color="#c400c4"/><stop offset="0.55" stop-color="#b800b8"/><stop offset="1" stop-color="#6e006e"/></linearGradient>
<linearGradient id="g5" x1="0" y1="0" x2="1" y2="0"><stop offset="0" stop-color="#50dcdc"/><stop offset="0.1" stop-color="#00c4c4"/><stop offset="0.55" stop-color="#00b4b4"/><stop offset="1" stop-color="#005c5c"/></linearGradient>
<linearGradient id="g6" x1="0" y1="0" x2="1" y2="0"><stop offset="0" stop-color="#4a4ae0"/><stop offset="0.2" stop-color="#0000c8"/><stop offset="0.6" stop-color="#0808b4"/><stop offset="1" stop-color="#000070"/></linearGradient>
<linearGradient id="g7" x1="0" y1="0" x2="1" y2="0"><stop offset="0" stop-color="#30d030"/><stop offset="0.2" stop-color="#00c400"/><stop offset="0.6" stop-color="#00b800"/><stop offset="1" stop-color="#007000"/></linearGradient>
<linearGradient id="g8" x1="0" y1="0" x2="1" y2="0"><stop offset="0" stop-color="#e04040"/><stop offset="0.2" stop-color="#c80000"/><stop offset="0.6" stop-color="#b80808"/><stop offset="1" stop-color="#700000"/></linearGradient>
<linearGradient id="g9" x1="0" y1="0" x2="1" y2="0"><stop offset="0" stop-color="#dcdcdc"/><stop offset="0.3" stop-color="#c8c8c8"/><stop offset="0.65" stop-color="#a6a6a6"/><stop offset="0.88" stop-color="#7c7c7c"/><stop offset="1" stop-color="#555555"/></linearGradient>
<linearGradient id="g10" x1="0" y1="0" x2="0" y2="1"><stop offset="0" stop-color="#ff0000"/><stop offset="0.5" stop-color="#ff0000"/><stop offset="1" stop-color="#8c0000"/></linearGradient>
<linearGradient id="g11" x1="0" y1="0" x2="0" y2="1"><stop offset="0" stop-color="#5a5aff"/><stop offset="0.05" stop-color="#0000ff"/><stop offset="0.55" stop-color="#0000f0"/><stop offset="1" stop-color="#000078"/></linearGradient>
<linearGradient id="g12" x1="0" y1="0" x2="0" y2="1"><stop offset="0" stop-color="#ffffff"/><stop offset="0.33" stop-color="#ffffff"/><stop offset="0.7" stop-color="#c8c8c8"/><stop offset="1" stop-color="#7a7a7a"/></linearGradient>
<linearGradient id="g13" x1="0" y1="0" x2="0" y2="1"><stop offset="0" stop-color="#3a3a3a"/><stop offset="0.5" stop-color="#2f2f2f"/><stop offset="0.53" stop-color="#1b1b1b"/><stop offset="1" stop-color="#111111"/></linearGradient>
<linearGradient id="g14" x1="0" y1="0" x2="0" y2="1"><stop offset="0" stop-color="#454545"/><stop offset="1" stop-color="#3a3a3a"/></linearGradient>
<linearGradient id="g15" x1="0" y1="0" x2="0" y2="1"><stop offset="0" stop-color="#7c7c7c"/><stop offset="1" stop-color="#6e6e6e"/></linearGradient>
<linearGradient id="g16" x1="0" y1="0" x2="0" y2="1"><stop offset="0" stop-color="#b4b4b4"/><stop offset="0.08" stop-color="#9a9a9a"/><stop offset="0.6" stop-color="#7a7a7a"/><stop offset="1" stop-color="#4e4e4e"/></linearGradient>
<linearGradient id="g17" x1="0" y1="0" x2="0" y2="1"><stop offset="0" stop-color="#050505"/><stop offset="0.58" stop-color="#070707"/><stop offset="0.68" stop-color="#262626"/><stop offset="0.9" stop-color="#303030"/></linearGradient>
<linearGradient id="g18" x1="0" y1="0" x2="0" y2="1"><stop offset="0" stop-color="#b0b0b0"/><stop offset="0.08" stop-color="#9a9a9a"/><stop offset="1" stop-color="#686868"/></linearGradient>
<linearGradient id="g19" x1="0" y1="0" x2="0" y2="1"><stop offset="0" stop-color="#bcbcbc"/><stop offset="0.1" stop-color="#a2a2a2"/><stop offset="1" stop-color="#626262"/></linearGradient>
<linearGradient id="g20" x1="0" y1="0" x2="0" y2="1"><stop offset="0" stop-color="#a8a8a8"/><stop offset="0.1" stop-color="#989898"/><stop offset="1" stop-color="#848484"/></linearGradient>
<radialGradient id="h1"><stop offset="0" stop-color="#b4b4b4" stop-opacity="0.15"/><stop offset="0.7" stop-color="#b8b8b8" stop-opacity="0.5"/><stop offset="1" stop-color="#b0b0b0" stop-opacity="0.12"/></radialGradient>
<linearGradient id="g21" x1="0" y1="0" x2="0" y2="1"><stop offset="0" stop-color="#1c1c1c"/><stop offset="0.4" stop-color="#080808"/><stop offset="0.45" stop-color="#000000"/><stop offset="1" stop-color="#000000"/></linearGradient>
<linearGradient id="g22" x1="0" y1="0" x2="0" y2="1"><stop offset="0" stop-color="#303030"/><stop offset="1" stop-color="#242424"/></linearGradient></defs>
<rect x="0" y="0" width="1920" height="938" fill="#323232" />
<rect x="0" y="0" width="3" height="938" fill="#2a2a2a" />
<rect x="0" y="876.2" width="1920" height="61.8" fill="url(#g1)" />
<text x="28" y="49.6" font-size="43.4" fill="#f4f4f4" stroke="#f4f4f4" stroke-width="0.78" textLength="223.5" lengthAdjust="spacingAndGlyphs" >Colorspace</text>
<rect x="24.25" y="109.5" width="385.75" height="450.9" fill="#242424" />
<line x1="75.43" y1="109.5" x2="75.43" y2="567.4" stroke="#858585" stroke-width="1.5" />
<line x1="126.61" y1="109.5" x2="126.61" y2="567.4" stroke="#858585" stroke-width="1.5" />
<line x1="177.79" y1="109.5" x2="177.79" y2="567.4" stroke="#858585" stroke-width="1.5" />
<line x1="228.97" y1="109.5" x2="228.97" y2="567.4" stroke="#858585" stroke-width="1.5" />
<line x1="280.15" y1="109.5" x2="280.15" y2="567.4" stroke="#858585" stroke-width="1.5" />
<line x1="331.33" y1="109.5" x2="331.33" y2="567.4" stroke="#858585" stroke-width="1.5" />
<line x1="382.51" y1="109.5" x2="382.51" y2="567.4" stroke="#858585" stroke-width="1.5" />
<line x1="24.25" y1="555.4" x2="24.25" y2="567.4" stroke="#8f8f8f" stroke-width="1.6" />
<rect x="24.25" y="109.5" width="385.75" height="450.9" fill="none" stroke="#8f8f8f" stroke-width="1.6"/>
<text x="217" y="104.8" font-size="15.5" fill="#cfcfcf" stroke="#cfcfcf" stroke-width="0.4" text-anchor="middle" textLength="92.5" lengthAdjust="spacingAndGlyphs" >DeltaE 2000</text>
<rect x="25.05" y="116" width="330.26" height="44.9" fill="#050505" rx="1"/>
<rect x="25.05" y="117" width="328.26" height="41.3" fill="url(#g2)" />
<rect x="25.05" y="172.36" width="55.07" height="44.9" fill="#050505" rx="1"/>
<rect x="25.05" y="173.36" width="53.07" height="41.3" fill="url(#g3)" />
<rect x="25.05" y="228.72" width="149.42" height="44.9" fill="#050505" rx="1"/>
<rect x="25.05" y="229.72" width="147.42" height="41.3" fill="url(#g4)" />
<rect x="25.05" y="285.08" width="271.82" height="44.9" fill="#050505" rx="1"/>
<rect x="25.05" y="286.08" width="269.82" height="41.3" fill="url(#g5)" />
<rect x="25.05" y="341.44" width="88.41" height="44.9" fill="#050505" rx="1"/>
<rect x="25.05" y="342.44" width="86.41" height="41.3" fill="url(#g6)" />
<rect x="25.05" y="397.8" width="59.97" height="44.9" fill="#050505" rx="1"/>
<rect x="25.05" y="398.8" width="57.97" height="41.3" fill="url(#g7)" />
<rect x="25.05" y="454.16" width="86.02" height="44.9" fill="#050505" rx="1"/>
<rect x="25.05" y="455.16" width="84.02" height="41.3" fill="url(#g8)" />
<rect x="25.05" y="510.52" width="291.41" height="44.9" fill="#050505" rx="1"/>
<rect x="25.05" y="511.52" width="289.41" height="41.3" fill="url(#g9)" />
<text x="23.75" y="584.2" font-size="15.5" fill="#cfcfcf" stroke="#cfcfcf" stroke-width="0.4" text-anchor="middle" textLength="9.1" lengthAdjust="spacingAndGlyphs" >0</text>
<text x="74.93" y="584.2" font-size="15.5" fill="#cfcfcf" stroke="#cfcfcf" stroke-width="0.4" text-anchor="middle" textLength="9.1" lengthAdjust="spacingAndGlyphs" >2</text>
<text x="126.11" y="584.2" font-size="15.5" fill="#cfcfcf" stroke="#cfcfcf" stroke-width="0.4" text-anchor="middle" textLength="9.1" lengthAdjust="spacingAndGlyphs" >4</text>
<text x="177.29" y="584.2" font-size="15.5" fill="#cfcfcf" stroke="#cfcfcf" stroke-width="0.4" text-anchor="middle" textLength="9.1" lengthAdjust="spacingAndGlyphs" >6</text>
<text x="228.47" y="584.2" font-size="15.5" fill="#cfcfcf" stroke="#cfcfcf" stroke-width="0.4" text-anchor="middle" textLength="9.1" lengthAdjust="spacingAndGlyphs" >8</text>
<text x="279.65" y="584.2" font-size="15.5" fill="#cfcfcf" stroke="#cfcfcf" stroke-width="0.4" text-anchor="middle" textLength="18.2" lengthAdjust="spacingAndGlyphs" >10</text>
<text x="330.83" y="584.2" font-size="15.5" fill="#cfcfcf" stroke="#cfcfcf" stroke-width="0.4" text-anchor="middle" textLength="18.2" lengthAdjust="spacingAndGlyphs" >12</text>
<text x="382.01" y="584.2" font-size="15.5" fill="#cfcfcf" stroke="#cfcfcf" stroke-width="0.4" text-anchor="middle" textLength="18.2" lengthAdjust="spacingAndGlyphs" >14</text>
<text x="17.3" y="673.3" font-size="32" fill="#f0f0f0" stroke="#f0f0f0" stroke-width="0.58" textLength="252" lengthAdjust="spacingAndGlyphs" >Current Reading</text>
<text x="17.5" y="720" font-size="26.4" fill="#f0f0f0" stroke="#f0f0f0" stroke-width="0.48" textLength="118.5" lengthAdjust="spacingAndGlyphs" >x: 0.2878</text>
<text x="17.5" y="764.3" font-size="26.4" fill="#f0f0f0" stroke="#f0f0f0" stroke-width="0.48" textLength="118.5" lengthAdjust="spacingAndGlyphs" >y: 0.2967</text>
<text x="17.5" y="809.2" font-size="26.4" fill="#f0f0f0" stroke="#f0f0f0" stroke-width="0.48" textLength="127" lengthAdjust="spacingAndGlyphs" >fL: 123.53</text>
<text x="17.5" y="853" font-size="26.4" fill="#f0f0f0" stroke="#f0f0f0" stroke-width="0.48" textLength="183" lengthAdjust="spacingAndGlyphs" >cd/m²: 423.24</text>
<rect x="407.5" y="652" width="291.25" height="196.5" fill="#242424" />
<line x1="400" y1="652" x2="698.75" y2="652" stroke="#8f8f8f" stroke-width="1.6" />
<line x1="400" y1="701.25" x2="698.75" y2="701.25" stroke="#8f8f8f" stroke-width="1.6" />
<line x1="400" y1="750.5" x2="698.75" y2="750.5" stroke="#8f8f8f" stroke-width="1.6" />
<line x1="400" y1="799.5" x2="698.75" y2="799.5" stroke="#8f8f8f" stroke-width="1.6" />
<line x1="400" y1="848.5" x2="698.75" y2="848.5" stroke="#8f8f8f" stroke-width="1.6" />
<line x1="407.5" y1="652" x2="407.5" y2="854.5" stroke="#8f8f8f" stroke-width="1.6" />
<line x1="698.75" y1="652" x2="698.75" y2="854.5" stroke="#8f8f8f" stroke-width="1.6" />
<text x="400.5" y="658.1" font-size="15.5" fill="#cfcfcf" stroke="#cfcfcf" stroke-width="0.4" text-anchor="end" textLength="17.4" lengthAdjust="spacingAndGlyphs" >40</text>
<text x="400.5" y="707.35" font-size="15.5" fill="#cfcfcf" stroke="#cfcfcf" stroke-width="0.4" text-anchor="end" textLength="17.4" lengthAdjust="spacingAndGlyphs" >20</text>
<text x="400.5" y="756.6" font-size="15.5" fill="#cfcfcf" stroke="#cfcfcf" stroke-width="0.4" text-anchor="end" textLength="8.7" lengthAdjust="spacingAndGlyphs" >0</text>
<text x="400.5" y="805.6" font-size="15.5" fill="#cfcfcf" stroke="#cfcfcf" stroke-width="0.4" text-anchor="end" textLength="23.5" lengthAdjust="spacingAndGlyphs" >-20</text>
<text x="400.5" y="854.6" font-size="15.5" fill="#cfcfcf" stroke="#cfcfcf" stroke-width="0.4" text-anchor="end" textLength="23.5" lengthAdjust="spacingAndGlyphs" >-40</text>
<text x="538" y="645" font-size="15.5" fill="#cfcfcf" stroke="#cfcfcf" stroke-width="0.4" text-anchor="middle" textLength="95" lengthAdjust="spacingAndGlyphs" >RGB Balance</text>
<text x="553" y="866" font-size="15.5" fill="#cfcfcf" stroke="#cfcfcf" stroke-width="0.4" text-anchor="middle" textLength="43.5" lengthAdjust="spacingAndGlyphs" >100W</text>
<rect x="436.5" y="750.5" width="79.5" height="28.5" fill="#050505" />
<rect x="438" y="751" width="76.25" height="26" fill="url(#g10)" />
<rect x="514" y="749.5" width="82" height="3" fill="#050505" />
<rect x="592.8" y="664.5" width="79.7" height="88" fill="#050505" />
<rect x="594.25" y="665.5" width="76.5" height="85" fill="url(#g11)" />
<rect x="471" y="37.3" width="166" height="344" fill="#242424" />
<line x1="463" y1="37.3" x2="637" y2="37.3" stroke="#8f8f8f" stroke-width="1.6" />
<line x1="463" y1="95.7" x2="637" y2="95.7" stroke="#8f8f8f" stroke-width="1.6" />
<line x1="463" y1="151.8" x2="637" y2="151.8" stroke="#8f8f8f" stroke-width="1.6" />
<line x1="463" y1="209.5" x2="637" y2="209.5" stroke="#8f8f8f" stroke-width="1.6" />
<line x1="463" y1="267.5" x2="637" y2="267.5" stroke="#8f8f8f" stroke-width="1.6" />
<line x1="463" y1="325.5" x2="637" y2="325.5" stroke="#8f8f8f" stroke-width="1.6" />
<line x1="463" y1="381.3" x2="637" y2="381.3" stroke="#8f8f8f" stroke-width="1.6" />
<line x1="471" y1="37.3" x2="471" y2="388.3" stroke="#8f8f8f" stroke-width="1.6" />
<line x1="637" y1="37.3" x2="637" y2="388.3" stroke="#8f8f8f" stroke-width="1.6" />
<text x="463.7" y="43.9" font-size="16" fill="#cfcfcf" stroke="#cfcfcf" stroke-width="0.42" text-anchor="end" textLength="18" lengthAdjust="spacingAndGlyphs" >15</text>
<text x="463.7" y="102.3" font-size="16" fill="#cfcfcf" stroke="#cfcfcf" stroke-width="0.42" text-anchor="end" textLength="18" lengthAdjust="spacingAndGlyphs" >10</text>
<text x="463.7" y="158.4" font-size="16" fill="#cfcfcf" stroke="#cfcfcf" stroke-width="0.42" text-anchor="end" textLength="9" lengthAdjust="spacingAndGlyphs" >5</text>
<text x="463.7" y="216.1" font-size="16" fill="#cfcfcf" stroke="#cfcfcf" stroke-width="0.42" text-anchor="end" textLength="9" lengthAdjust="spacingAndGlyphs" >0</text>
<text x="463.7" y="274.1" font-size="16" fill="#cfcfcf" stroke="#cfcfcf" stroke-width="0.42" text-anchor="end" textLength="18" lengthAdjust="spacingAndGlyphs" >-5</text>
<text x="463.7" y="332.1" font-size="16" fill="#cfcfcf" stroke="#cfcfcf" stroke-width="0.42" text-anchor="end" textLength="24" lengthAdjust="spacingAndGlyphs" >-10</text>
<text x="463.7" y="387.9" font-size="16" fill="#cfcfcf" stroke="#cfcfcf" stroke-width="0.42" text-anchor="end" textLength="24" lengthAdjust="spacingAndGlyphs" >-15</text>
<text x="538" y="32" font-size="16" fill="#cfcfcf" stroke="#cfcfcf" stroke-width="0.42" text-anchor="middle" textLength="48.5" lengthAdjust="spacingAndGlyphs" >DeltaL</text>
<text x="553.2" y="398.8" font-size="15.5" fill="#cfcfcf" stroke="#cfcfcf" stroke-width="0.4" text-anchor="middle" textLength="44.5" lengthAdjust="spacingAndGlyphs" >100W</text>
<rect x="486.5" y="208.5" width="134" height="2.6" fill="#0a0a0a" />
<rect x="697.3" y="37.3" width="166.4" height="344" fill="#242424" />
<line x1="689.3" y1="37.3" x2="863.7" y2="37.3" stroke="#8f8f8f" stroke-width="1.6" />
<line x1="689.3" y1="95.7" x2="863.7" y2="95.7" stroke="#8f8f8f" stroke-width="1.6" />
<line x1="689.3" y1="151.8" x2="863.7" y2="151.8" stroke="#8f8f8f" stroke-width="1.6" />
<line x1="689.3" y1="209.5" x2="863.7" y2="209.5" stroke="#8f8f8f" stroke-width="1.6" />
<line x1="689.3" y1="267.5" x2="863.7" y2="267.5" stroke="#8f8f8f" stroke-width="1.6" />
<line x1="689.3" y1="325.5" x2="863.7" y2="325.5" stroke="#8f8f8f" stroke-width="1.6" />
<line x1="689.3" y1="381.3" x2="863.7" y2="381.3" stroke="#8f8f8f" stroke-width="1.6" />
<line x1="697.3" y1="37.3" x2="697.3" y2="388.3" stroke="#8f8f8f" stroke-width="1.6" />
<line x1="863.7" y1="37.3" x2="863.7" y2="388.3" stroke="#8f8f8f" stroke-width="1.6" />
<text x="690" y="43.9" font-size="16" fill="#cfcfcf" stroke="#cfcfcf" stroke-width="0.42" text-anchor="end" textLength="18" lengthAdjust="spacingAndGlyphs" >15</text>
<text x="690" y="102.3" font-size="16" fill="#cfcfcf" stroke="#cfcfcf" stroke-width="0.42" text-anchor="end" textLength="18" lengthAdjust="spacingAndGlyphs" >10</text>
<text x="690" y="158.4" font-size="16" fill="#cfcfcf" stroke="#cfcfcf" stroke-width="0.42" text-anchor="end" textLength="9" lengthAdjust="spacingAndGlyphs" >5</text>
<text x="690" y="216.1" font-size="16" fill="#cfcfcf" stroke="#cfcfcf" stroke-width="0.42" text-anchor="end" textLength="9" lengthAdjust="spacingAndGlyphs" >0</text>
<text x="690" y="274.1" font-size="16" fill="#cfcfcf" stroke="#cfcfcf" stroke-width="0.42" text-anchor="end" textLength="18" lengthAdjust="spacingAndGlyphs" >-5</text>
<text x="690" y="332.1" font-size="16" fill="#cfcfcf" stroke="#cfcfcf" stroke-width="0.42" text-anchor="end" textLength="24" lengthAdjust="spacingAndGlyphs" >-10</text>
<text x="690" y="387.9" font-size="16" fill="#cfcfcf" stroke="#cfcfcf" stroke-width="0.42" text-anchor="end" textLength="24" lengthAdjust="spacingAndGlyphs" >-15</text>
<text x="765" y="32" font-size="16" fill="#cfcfcf" stroke="#cfcfcf" stroke-width="0.42" text-anchor="middle" textLength="50.5" lengthAdjust="spacingAndGlyphs" >DeltaC</text>
<text x="779.7" y="398.8" font-size="15.5" fill="#cfcfcf" stroke="#cfcfcf" stroke-width="0.4" text-anchor="middle" textLength="44.5" lengthAdjust="spacingAndGlyphs" >100W</text>
<rect x="713.5" y="36" width="133.2" height="175" fill="#050505" />
<rect x="715" y="36" width="130" height="173" fill="url(#g12)" />
<rect x="924.4" y="37.3" width="166.2" height="344" fill="#242424" />
<line x1="916.4" y1="37.3" x2="1090.6" y2="37.3" stroke="#8f8f8f" stroke-width="1.6" />
<line x1="916.4" y1="95.7" x2="1090.6" y2="95.7" stroke="#8f8f8f" stroke-width="1.6" />
<line x1="916.4" y1="151.8" x2="1090.6" y2="151.8" stroke="#8f8f8f" stroke-width="1.6" />
<line x1="916.4" y1="209.5" x2="1090.6" y2="209.5" stroke="#8f8f8f" stroke-width="1.6" />
<line x1="916.4" y1="267.5" x2="1090.6" y2="267.5" stroke="#8f8f8f" stroke-width="1.6" />
<line x1="916.4" y1="325.5" x2="1090.6" y2="325.5" stroke="#8f8f8f" stroke-width="1.6" />
<line x1="916.4" y1="381.3" x2="1090.6" y2="381.3" stroke="#8f8f8f" stroke-width="1.6" />
<line x1="924.4" y1="37.3" x2="924.4" y2="388.3" stroke="#8f8f8f" stroke-width="1.6" />
<line x1="1090.6" y1="37.3" x2="1090.6" y2="388.3" stroke="#8f8f8f" stroke-width="1.6" />
<text x="917.1" y="43.9" font-size="16" fill="#cfcfcf" stroke="#cfcfcf" stroke-width="0.42" text-anchor="end" textLength="18" lengthAdjust="spacingAndGlyphs" >15</text>
<text x="917.1" y="102.3" font-size="16" fill="#cfcfcf" stroke="#cfcfcf" stroke-width="0.42" text-anchor="end" textLength="18" lengthAdjust="spacingAndGlyphs" >10</text>
<text x="917.1" y="158.4" font-size="16" fill="#cfcfcf" stroke="#cfcfcf" stroke-width="0.42" text-anchor="end" textLength="9" lengthAdjust="spacingAndGlyphs" >5</text>
<text x="917.1" y="216.1" font-size="16" fill="#cfcfcf" stroke="#cfcfcf" stroke-width="0.42" text-anchor="end" textLength="9" lengthAdjust="spacingAndGlyphs" >0</text>
<text x="917.1" y="274.1" font-size="16" fill="#cfcfcf" stroke="#cfcfcf" stroke-width="0.42" text-anchor="end" textLength="18" lengthAdjust="spacingAndGlyphs" >-5</text>
<text x="917.1" y="332.1" font-size="16" fill="#cfcfcf" stroke="#cfcfcf" stroke-width="0.42" text-anchor="end" textLength="24" lengthAdjust="spacingAndGlyphs" >-10</text>
<text x="917.1" y="387.9" font-size="16" fill="#cfcfcf" stroke="#cfcfcf" stroke-width="0.42" text-anchor="end" textLength="24" lengthAdjust="spacingAndGlyphs" >-15</text>
<text x="992.2" y="32" font-size="16" fill="#cfcfcf" stroke="#cfcfcf" stroke-width="0.42" text-anchor="middle" textLength="50.5" lengthAdjust="spacingAndGlyphs" >DeltaH</text>
<text x="1006.7" y="398.8" font-size="15.5" fill="#cfcfcf" stroke="#cfcfcf" stroke-width="0.4" text-anchor="middle" textLength="44.5" lengthAdjust="spacingAndGlyphs" >100W</text>
<rect x="939.9" y="208.5" width="134" height="2.6" fill="#0a0a0a" />
<rect x="432.5" y="418" width="680.9" height="175.75" fill="#000000" />
<rect x="452.6" y="424.5" width="71.4" height="145" fill="#bac4e0" />
<rect x="452.6" y="497.1" width="71.4" height="72.4" fill="#c5c5c5" />
<rect x="453.4" y="425.2" width="69.8" height="143.6" fill="none" stroke="#d4d8e8" stroke-width="1.6" opacity="0.85"/>
<text x="488.3" y="585" font-size="13.5" fill="#ffffff" stroke="#ffffff" stroke-width="0.55" text-anchor="middle" textLength="38" lengthAdjust="spacingAndGlyphs" >White</text>
<rect x="535.75" y="424.5" width="71.4" height="145" fill="#b21400" />
<rect x="535.75" y="497.1" width="71.4" height="72.4" fill="#c50006" />
<rect x="536.55" y="425.2" width="69.8" height="143.6" fill="none" stroke="#e6a098" stroke-width="1.6" opacity="0.85"/>
<text x="571.45" y="585" font-size="13.5" fill="#ffffff" stroke="#ffffff" stroke-width="0.55" text-anchor="middle" textLength="24" lengthAdjust="spacingAndGlyphs" >Red</text>
<rect x="618.9" y="424.5" width="71.4" height="145" fill="#41c300" />
<rect x="618.9" y="497.1" width="71.4" height="72.4" fill="#14c319" />
<rect x="619.7" y="425.2" width="69.8" height="143.6" fill="none" stroke="#b0eaa0" stroke-width="1.6" opacity="0.85"/>
<text x="654.6" y="585" font-size="13.5" fill="#ffffff" stroke="#ffffff" stroke-width="0.55" text-anchor="middle" textLength="39" lengthAdjust="spacingAndGlyphs" >Green</text>
<rect x="702.05" y="424.5" width="71.4" height="145" fill="#1600dc" />
<rect x="702.05" y="497.1" width="71.4" height="72.4" fill="#1c14be" />
<rect x="702.85" y="425.2" width="69.8" height="143.6" fill="none" stroke="#a8a0f0" stroke-width="1.6" opacity="0.85"/>
<text x="737.75" y="585" font-size="13.5" fill="#ffffff" stroke="#ffffff" stroke-width="0.55" text-anchor="middle" textLength="28" lengthAdjust="spacingAndGlyphs" >Blue</text>
<rect x="785.2" y="424.5" width="71.4" height="145" fill="#3ebede" />
<rect x="785.2" y="497.1" width="71.4" height="72.4" fill="#00c1c3" />
<rect x="786" y="425.2" width="69.8" height="143.6" fill="none" stroke="#a0e0ee" stroke-width="1.6" opacity="0.85"/>
<text x="820.9" y="585" font-size="13.5" fill="#ffffff" stroke="#ffffff" stroke-width="0.55" text-anchor="middle" textLength="31" lengthAdjust="spacingAndGlyphs" >Cyan</text>
<rect x="868.35" y="424.5" width="71.4" height="145" fill="#af00de" />
<rect x="868.35" y="497.1" width="71.4" height="72.4" fill="#c314c3" />
<rect x="869.15" y="425.2" width="69.8" height="143.6" fill="none" stroke="#dc8cf0" stroke-width="1.6" opacity="0.85"/>
<text x="904.05" y="585" font-size="13.5" fill="#ffffff" stroke="#ffffff" stroke-width="0.55" text-anchor="middle" textLength="56" lengthAdjust="spacingAndGlyphs" >Magenta</text>
<rect x="951.5" y="424.5" width="71.4" height="145" fill="#c0c300" />
<rect x="951.5" y="497.1" width="71.4" height="72.4" fill="#c5c314" />
<rect x="952.3" y="425.2" width="69.8" height="143.6" fill="none" stroke="#e2e388" stroke-width="1.6" opacity="0.85"/>
<text x="987.2" y="585" font-size="13.5" fill="#ffffff" stroke="#ffffff" stroke-width="0.55" text-anchor="middle" textLength="41" lengthAdjust="spacingAndGlyphs" >Yellow</text>
<rect x="1034.65" y="424.5" width="71.4" height="145" fill="#dee4ff" />
<rect x="1034.65" y="497.1" width="71.4" height="72.4" fill="#e1e1e1" />
<rect x="1035.45" y="425.2" width="69.8" height="143.6" fill="none" stroke="#eef0fa" stroke-width="1.6" opacity="0.85"/>
<text x="1070.35" y="585" font-size="13.5" fill="#ffffff" stroke="#ffffff" stroke-width="0.55" text-anchor="middle" textLength="37" lengthAdjust="spacingAndGlyphs" >100W</text>
<text x="447.2" y="457" font-size="12.5" fill="#ffffff" stroke="#ffffff" stroke-width="0.5" text-anchor="middle" textLength="37.5" lengthAdjust="spacingAndGlyphs" transform="rotate(-90 447.2 457)" >Actual</text>
<text x="447.2" y="537.8" font-size="12.5" fill="#ffffff" stroke="#ffffff" stroke-width="0.5" text-anchor="middle" textLength="37" lengthAdjust="spacingAndGlyphs" transform="rotate(-90 447.2 537.8)" >Target</text>
<rect x="723.75" y="625.6" width="15.75" height="43" fill="#000000" />
<rect x="723.75" y="668.6" width="15.75" height="196.9" fill="#282828" />
<rect x="739.5" y="625.6" width="781.1" height="43" fill="url(#g13)" />
<rect x="1520.6" y="625.6" width="6.5" height="239.9" fill="#383838" />
<rect x="739.5" y="668.6" width="781.1" height="39.4" fill="url(#g14)" />
<rect x="723.75" y="668.6" width="15.75" height="1.5" fill="#1e1e1e" />
<rect x="739.5" y="708" width="781.1" height="40.75" fill="url(#g15)" />
<rect x="723.75" y="708" width="15.75" height="1.5" fill="#1e1e1e" />
<rect x="739.5" y="748.75" width="781.1" height="38.75" fill="url(#g14)" />
<rect x="723.75" y="748.75" width="15.75" height="1.5" fill="#1e1e1e" />
<rect x="739.5" y="787.5" width="781.1" height="38.75" fill="url(#g15)" />
<rect x="723.75" y="787.5" width="15.75" height="1.5" fill="#1e1e1e" />
<rect x="739.5" y="826.25" width="781.1" height="39.25" fill="url(#g14)" />
<rect x="723.75" y="826.25" width="15.75" height="1.5" fill="#1e1e1e" />
<text x="827.8" y="656.4" font-size="22.8" fill="#f2f2f2" stroke="#f2f2f2" stroke-width="0.41" textLength="49" lengthAdjust="spacingAndGlyphs" >White</text>
<text x="918.8" y="656.4" font-size="22.8" fill="#f2f2f2" stroke="#f2f2f2" stroke-width="0.41" textLength="30.5" lengthAdjust="spacingAndGlyphs" >Red</text>
<text x="999.2" y="656.4" font-size="22.8" fill="#f2f2f2" stroke="#f2f2f2" stroke-width="0.41" textLength="50" lengthAdjust="spacingAndGlyphs" >Green</text>
<text x="1090.5" y="656.4" font-size="22.8" fill="#f2f2f2" stroke="#f2f2f2" stroke-width="0.41" textLength="35.5" lengthAdjust="spacingAndGlyphs" >Blue</text>
<text x="1170.6" y="656.4" font-size="22.8" fill="#f2f2f2" stroke="#f2f2f2" stroke-width="0.41" textLength="39.5" lengthAdjust="spacingAndGlyphs" >Cyan</text>
<text x="1262" y="656.4" font-size="22.8" fill="#f2f2f2" stroke="#f2f2f2" stroke-width="0.41" textLength="71" lengthAdjust="spacingAndGlyphs" >Magenta</text>
<text x="1343.4" y="656.4" font-size="22.8" fill="#f2f2f2" stroke="#f2f2f2" stroke-width="0.41" textLength="52" lengthAdjust="spacingAndGlyphs" >Yellow</text>
<text x="1435" y="656.4" font-size="22.8" fill="#f2f2f2" stroke="#f2f2f2" stroke-width="0.41" textLength="47.5" lengthAdjust="spacingAndGlyphs" >100W</text>
<text x="745" y="698" font-size="24" fill="#f0f0f0" stroke="#f0f0f0" stroke-width="0.43" textLength="67" lengthAdjust="spacingAndGlyphs" >x: CIE31</text>
<text x="827.8" y="698" font-size="24" fill="#f0f0f0" stroke="#f0f0f0" stroke-width="0.43" textLength="57.5" lengthAdjust="spacingAndGlyphs" >0.2861</text>
<text x="918.8" y="698" font-size="24" fill="#f0f0f0" stroke="#f0f0f0" stroke-width="0.43" textLength="57.5" lengthAdjust="spacingAndGlyphs" >0.6359</text>
<text x="999.2" y="698" font-size="24" fill="#f0f0f0" stroke="#f0f0f0" stroke-width="0.43" textLength="57.5" lengthAdjust="spacingAndGlyphs" >0.3173</text>
<text x="1090.5" y="698" font-size="24" fill="#f0f0f0" stroke="#f0f0f0" stroke-width="0.43" textLength="57.5" lengthAdjust="spacingAndGlyphs" >0.1478</text>
<text x="1170.6" y="698" font-size="24" fill="#f0f0f0" stroke="#f0f0f0" stroke-width="0.43" textLength="57.5" lengthAdjust="spacingAndGlyphs" >0.2214</text>
<text x="1262" y="698" font-size="24" fill="#f0f0f0" stroke="#f0f0f0" stroke-width="0.43" textLength="57.5" lengthAdjust="spacingAndGlyphs" >0.2676</text>
<text x="1343.4" y="698" font-size="24" fill="#f0f0f0" stroke="#f0f0f0" stroke-width="0.43" textLength="57.5" lengthAdjust="spacingAndGlyphs" >0.4131</text>
<text x="1435" y="698" font-size="24" fill="#f0f0f0" stroke="#f0f0f0" stroke-width="0.43" textLength="57.5" lengthAdjust="spacingAndGlyphs" >0.2878</text>
<text x="745" y="737.2" font-size="24" fill="#f0f0f0" stroke="#f0f0f0" stroke-width="0.43" textLength="67" lengthAdjust="spacingAndGlyphs" >y: CIE31</text>
<text x="827.8" y="737.2" font-size="24" fill="#f0f0f0" stroke="#f0f0f0" stroke-width="0.43" textLength="57.5" lengthAdjust="spacingAndGlyphs" >0.2954</text>
<text x="918.8" y="737.2" font-size="24" fill="#f0f0f0" stroke="#f0f0f0" stroke-width="0.43" textLength="57.5" lengthAdjust="spacingAndGlyphs" >0.3357</text>
<text x="999.2" y="737.2" font-size="24" fill="#f0f0f0" stroke="#f0f0f0" stroke-width="0.43" textLength="57.5" lengthAdjust="spacingAndGlyphs" >0.5932</text>
<text x="1090.5" y="737.2" font-size="24" fill="#f0f0f0" stroke="#f0f0f0" stroke-width="0.43" textLength="57.5" lengthAdjust="spacingAndGlyphs" >0.0537</text>
<text x="1170.6" y="737.2" font-size="24" fill="#f0f0f0" stroke="#f0f0f0" stroke-width="0.43" textLength="57.5" lengthAdjust="spacingAndGlyphs" >0.2882</text>
<text x="1262" y="737.2" font-size="24" fill="#f0f0f0" stroke="#f0f0f0" stroke-width="0.43" textLength="57.5" lengthAdjust="spacingAndGlyphs" >0.1225</text>
<text x="1343.4" y="737.2" font-size="24" fill="#f0f0f0" stroke="#f0f0f0" stroke-width="0.43" textLength="57.5" lengthAdjust="spacingAndGlyphs" >0.5168</text>
<text x="1435" y="737.2" font-size="24" fill="#f0f0f0" stroke="#f0f0f0" stroke-width="0.43" textLength="57.5" lengthAdjust="spacingAndGlyphs" >0.2967</text>
<text x="745" y="776.2" font-size="24" fill="#f0f0f0" stroke="#f0f0f0" stroke-width="0.43" textLength="10.5" lengthAdjust="spacingAndGlyphs" >Y</text>
<text x="827.8" y="776.2" font-size="24" fill="#f0f0f0" stroke="#f0f0f0" stroke-width="0.43" textLength="79" lengthAdjust="spacingAndGlyphs" >226.0129</text>
<text x="918.8" y="776.2" font-size="24" fill="#f0f0f0" stroke="#f0f0f0" stroke-width="0.43" textLength="68.5" lengthAdjust="spacingAndGlyphs" >39.9965</text>
<text x="999.2" y="776.2" font-size="24" fill="#f0f0f0" stroke="#f0f0f0" stroke-width="0.43" textLength="79" lengthAdjust="spacingAndGlyphs" >165.9309</text>
<text x="1090.5" y="776.2" font-size="24" fill="#f0f0f0" stroke="#f0f0f0" stroke-width="0.43" textLength="68.5" lengthAdjust="spacingAndGlyphs" >19.6103</text>
<text x="1170.6" y="776.2" font-size="24" fill="#f0f0f0" stroke="#f0f0f0" stroke-width="0.43" textLength="79" lengthAdjust="spacingAndGlyphs" >185.9792</text>
<text x="1262" y="776.2" font-size="24" fill="#f0f0f0" stroke="#f0f0f0" stroke-width="0.43" textLength="68.5" lengthAdjust="spacingAndGlyphs" >59.4079</text>
<text x="1343.4" y="776.2" font-size="24" fill="#f0f0f0" stroke="#f0f0f0" stroke-width="0.43" textLength="79" lengthAdjust="spacingAndGlyphs" >205.8841</text>
<text x="1435" y="776.2" font-size="24" fill="#f0f0f0" stroke="#f0f0f0" stroke-width="0.43" textLength="79" lengthAdjust="spacingAndGlyphs" >423.2370</text>
<text x="745" y="815.8" font-size="24" fill="#f0f0f0" stroke="#f0f0f0" stroke-width="0.43" textLength="70" lengthAdjust="spacingAndGlyphs" >Target Y</text>
<text x="827.8" y="815.8" font-size="24" fill="#f0f0f0" stroke="#f0f0f0" stroke-width="0.43" textLength="79" lengthAdjust="spacingAndGlyphs" >226.0129</text>
<text x="918.8" y="815.8" font-size="24" fill="#f0f0f0" stroke="#f0f0f0" stroke-width="0.43" textLength="68.5" lengthAdjust="spacingAndGlyphs" >48.0630</text>
<text x="999.2" y="815.8" font-size="24" fill="#f0f0f0" stroke="#f0f0f0" stroke-width="0.43" textLength="79" lengthAdjust="spacingAndGlyphs" >161.6351</text>
<text x="1090.5" y="815.8" font-size="24" fill="#f0f0f0" stroke="#f0f0f0" stroke-width="0.43" textLength="68.5" lengthAdjust="spacingAndGlyphs" >16.3149</text>
<text x="1170.6" y="815.8" font-size="24" fill="#f0f0f0" stroke="#f0f0f0" stroke-width="0.43" textLength="79" lengthAdjust="spacingAndGlyphs" >177.9499</text>
<text x="1262" y="815.8" font-size="24" fill="#f0f0f0" stroke="#f0f0f0" stroke-width="0.43" textLength="68.5" lengthAdjust="spacingAndGlyphs" >64.3779</text>
<text x="1343.4" y="815.8" font-size="24" fill="#f0f0f0" stroke="#f0f0f0" stroke-width="0.43" textLength="79" lengthAdjust="spacingAndGlyphs" >209.6980</text>
<text x="1435" y="815.8" font-size="24" fill="#f0f0f0" stroke="#f0f0f0" stroke-width="0.43" textLength="79" lengthAdjust="spacingAndGlyphs" >423.2370</text>
<text x="745" y="854.6" font-size="24" fill="#f0f0f0" stroke="#f0f0f0" stroke-width="0.43" textLength="71" lengthAdjust="spacingAndGlyphs" >ΔE 2000</text>
<text x="827.8" y="854.6" font-size="24" fill="#f0f0f0" stroke="#f0f0f0" stroke-width="0.43" textLength="68.5" lengthAdjust="spacingAndGlyphs" >11.3993</text>
<text x="918.8" y="854.6" font-size="24" fill="#f0f0f0" stroke="#f0f0f0" stroke-width="0.43" textLength="57.5" lengthAdjust="spacingAndGlyphs" >3.3733</text>
<text x="999.2" y="854.6" font-size="24" fill="#f0f0f0" stroke="#f0f0f0" stroke-width="0.43" textLength="57.5" lengthAdjust="spacingAndGlyphs" >2.3553</text>
<text x="1090.5" y="854.6" font-size="24" fill="#f0f0f0" stroke="#f0f0f0" stroke-width="0.43" textLength="57.5" lengthAdjust="spacingAndGlyphs" >3.4665</text>
<text x="1170.6" y="854.6" font-size="24" fill="#f0f0f0" stroke="#f0f0f0" stroke-width="0.43" textLength="68.5" lengthAdjust="spacingAndGlyphs" >10.6340</text>
<text x="1262" y="854.6" font-size="24" fill="#f0f0f0" stroke="#f0f0f0" stroke-width="0.43" textLength="57.5" lengthAdjust="spacingAndGlyphs" >5.8508</text>
<text x="1343.4" y="854.6" font-size="24" fill="#f0f0f0" stroke="#f0f0f0" stroke-width="0.43" textLength="57.5" lengthAdjust="spacingAndGlyphs" >2.1638</text>
<text x="1435" y="854.6" font-size="24" fill="#f0f0f0" stroke="#f0f0f0" stroke-width="0.43" textLength="68.5" lengthAdjust="spacingAndGlyphs" >12.9177</text>
<rect x="1.8" y="876" width="149.6" height="60.6" rx="4.5" fill="url(#g16)"/>
<rect x="2.4" y="876.6" width="148.4" height="59.4" rx="4" fill="none" stroke="#c4c4c4" stroke-opacity="0.5" stroke-width="1.2"/>
<rect x="6.4" y="880.6" width="141.4" height="37.6" rx="3" fill="#4a4a4a" opacity="0.6"/>
<rect x="7.6" y="882" width="139" height="35.2" rx="2.5" fill="#c0c0c0"/>
<text x="76.6" y="932.8" font-size="11.5" fill="#3a3a3a" text-anchor="middle" textLength="29" lengthAdjust="spacingAndGlyphs" font-weight="bold" >White</text>
<rect x="153.8" y="876" width="149.6" height="60.6" rx="4.5" fill="url(#g16)"/>
<rect x="154.4" y="876.6" width="148.4" height="59.4" rx="4" fill="none" stroke="#c4c4c4" stroke-opacity="0.5" stroke-width="1.2"/>
<rect x="158.4" y="880.6" width="141.4" height="37.6" rx="3" fill="#4a4a4a" opacity="0.6"/>
<rect x="159.6" y="882" width="139" height="35.2" rx="2.5" fill="#c40000"/>
<text x="228.6" y="932.8" font-size="11.5" fill="#3a3a3a" text-anchor="middle" textLength="18.5" lengthAdjust="spacingAndGlyphs" font-weight="bold" >Red</text>
<rect x="305.8" y="876" width="149.6" height="60.6" rx="4.5" fill="url(#g16)"/>
<rect x="306.4" y="876.6" width="148.4" height="59.4" rx="4" fill="none" stroke="#c4c4c4" stroke-opacity="0.5" stroke-width="1.2"/>
<rect x="310.4" y="880.6" width="141.4" height="37.6" rx="3" fill="#4a4a4a" opacity="0.6"/>
<rect x="311.6" y="882" width="139" height="35.2" rx="2.5" fill="#00c400"/>
<text x="380.6" y="932.8" font-size="11.5" fill="#3a3a3a" text-anchor="middle" textLength="30" lengthAdjust="spacingAndGlyphs" font-weight="bold" >Green</text>
<rect x="457.8" y="876" width="149.6" height="60.6" rx="4.5" fill="url(#g16)"/>
<rect x="458.4" y="876.6" width="148.4" height="59.4" rx="4" fill="none" stroke="#c4c4c4" stroke-opacity="0.5" stroke-width="1.2"/>
<rect x="462.4" y="880.6" width="141.4" height="37.6" rx="3" fill="#4a4a4a" opacity="0.6"/>
<rect x="463.6" y="882" width="139" height="35.2" rx="2.5" fill="#0000c4"/>
<text x="532.6" y="932.8" font-size="11.5" fill="#3a3a3a" text-anchor="middle" textLength="21.5" lengthAdjust="spacingAndGlyphs" font-weight="bold" >Blue</text>
<rect x="609.8" y="876" width="149.6" height="60.6" rx="4.5" fill="url(#g16)"/>
<rect x="610.4" y="876.6" width="148.4" height="59.4" rx="4" fill="none" stroke="#c4c4c4" stroke-opacity="0.5" stroke-width="1.2"/>
<rect x="614.4" y="880.6" width="141.4" height="37.6" rx="3" fill="#4a4a4a" opacity="0.6"/>
<rect x="615.6" y="882" width="139" height="35.2" rx="2.5" fill="#00c0c0"/>
<text x="684.6" y="932.8" font-size="11.5" fill="#3a3a3a" text-anchor="middle" textLength="24" lengthAdjust="spacingAndGlyphs" font-weight="bold" >Cyan</text>
<rect x="761.8" y="876" width="149.6" height="60.6" rx="4.5" fill="url(#g16)"/>
<rect x="762.4" y="876.6" width="148.4" height="59.4" rx="4" fill="none" stroke="#c4c4c4" stroke-opacity="0.5" stroke-width="1.2"/>
<rect x="766.4" y="880.6" width="141.4" height="37.6" rx="3" fill="#4a4a4a" opacity="0.6"/>
<rect x="767.6" y="882" width="139" height="35.2" rx="2.5" fill="#c000c0"/>
<text x="836.6" y="932.8" font-size="11.5" fill="#3a3a3a" text-anchor="middle" textLength="43" lengthAdjust="spacingAndGlyphs" font-weight="bold" >Magenta</text>
<rect x="913.8" y="876" width="149.6" height="60.6" rx="4.5" fill="url(#g16)"/>
<rect x="914.4" y="876.6" width="148.4" height="59.4" rx="4" fill="none" stroke="#c4c4c4" stroke-opacity="0.5" stroke-width="1.2"/>
<rect x="918.4" y="880.6" width="141.4" height="37.6" rx="3" fill="#4a4a4a" opacity="0.6"/>
<rect x="919.6" y="882" width="139" height="35.2" rx="2.5" fill="#c4c400"/>
<text x="988.6" y="932.8" font-size="11.5" fill="#3a3a3a" text-anchor="middle" textLength="31.7" lengthAdjust="spacingAndGlyphs" font-weight="bold" >Yellow</text>
<rect x="1065.8" y="876" width="149.6" height="70" rx="4.5" fill="url(#g17)"/>
<rect x="1071.6" y="882" width="139" height="35.2" rx="2.5" fill="#ffffff"/>
<text x="1140.6" y="932.8" font-size="11.5" fill="#ffffff" text-anchor="middle" textLength="28.3" lengthAdjust="spacingAndGlyphs" font-weight="bold" >100W</text>
<rect x="1597.5" y="876.5" width="47.5" height="19" rx="3" fill="url(#g20)"/>
<rect x="1597.5" y="895.5" width="47.5" height="48" rx="2" fill="url(#g19)"/>
<line x1="1598" y1="895.3" x2="1645" y2="895.3" stroke="#484848" stroke-width="1.1" />
<ellipse cx="1621.4" cy="885" rx="7" ry="5.6" fill="url(#h1)"/>
<path d="M1618 886.8 L1621.4 883 L1624.8 886.8 Z" fill="#303030"/>
<rect x="1607.4" y="902" width="28.2" height="28.6" rx="3.5" fill="#b4b4b4" stroke="#141414" stroke-width="2.2"/>
<rect x="1610.6" y="905.2" width="21.8" height="22.2" rx="2" fill="none" stroke="#cfcfcf" stroke-width="1.2" opacity="0.7"/>
<rect x="1614.7" y="909.3" width="13.8" height="13.9" fill="url(#g21)"/>
<rect x="1647" y="876.5" width="225.4" height="30" rx="2.5" fill="url(#g18)"/>
<line x1="1693.5" y1="877.5" x2="1693.5" y2="906.5" stroke="#484848" stroke-width="1.1" />
<line x1="1694.5" y1="877.5" x2="1694.5" y2="906.5" stroke="#b0b0b0" stroke-width="0.8" opacity="0.35"/>
<line x1="1739" y1="877.5" x2="1739" y2="906.5" stroke="#484848" stroke-width="1.1" />
<line x1="1740" y1="877.5" x2="1740" y2="906.5" stroke="#b0b0b0" stroke-width="0.8" opacity="0.35"/>
<line x1="1783" y1="877.5" x2="1783" y2="906.5" stroke="#484848" stroke-width="1.1" />
<line x1="1784" y1="877.5" x2="1784" y2="906.5" stroke="#b0b0b0" stroke-width="0.8" opacity="0.35"/>
<line x1="1828" y1="877.5" x2="1828" y2="906.5" stroke="#484848" stroke-width="1.1" />
<line x1="1829" y1="877.5" x2="1829" y2="906.5" stroke="#b0b0b0" stroke-width="0.8" opacity="0.35"/>
<circle cx="1670.35" cy="891.5" r="9.6" fill="url(#h1)"/>
<circle cx="1716.25" cy="891.5" r="9.6" fill="url(#h1)"/>
<circle cx="1761" cy="891.5" r="9.6" fill="url(#h1)"/>
<circle cx="1805.5" cy="891.5" r="9.6" fill="url(#h1)"/>
<circle cx="1850" cy="891.5" r="9.6" fill="url(#h1)"/>
<rect x="1665.35" y="887.6" width="8" height="8" fill="#2c2c2c"/>
<path d="M1712.25 886.4 L1720.85 892 L1712.25 897.6 Z" fill="#2c2c2c"/>
<path d="M1756.4 886 V897.4 M1765.2 886 V897.4 M1756.4 891.8 H1765.2" stroke="#2c2c2c" stroke-width="2" fill="none"/>
<path d="M1755.4 885 Q1760.8 881.6 1766.2 885" stroke="#2c2c2c" stroke-width="1.6" fill="none" opacity="0.8"/>
<text x="1805" y="895.6" font-size="15.5" font-weight="bold" fill="#2c2c2c" text-anchor="middle">∞</text>
<path d="M1844.8 890 A5 5 0 0 1 1853.6 888.6 M1854.4 893.6 A5 5 0 0 1 1845.6 895" stroke="#2c2c2c" stroke-width="2.3" fill="none"/>
<path d="M1856 884.8 L1855.8 890.8 L1850.6 889.8 Z M1843 898.6 L1843.2 892.6 L1848.4 893.6 Z" fill="#2c2c2c"/>
<rect x="1873" y="876.5" width="50" height="30" rx="2.5" fill="url(#g22)"/>
<circle cx="1895.6" cy="891" r="9.5" fill="#3a3a3a"/>
<rect x="1647" y="907.4" width="270.4" height="40" rx="3" fill="url(#g19)"/>
<line x1="1647" y1="906.9" x2="1917" y2="906.9" stroke="#484848" stroke-width="1.1" />
<line x1="1783.2" y1="908" x2="1783.2" y2="938" stroke="#484848" stroke-width="1.1" />
<line x1="1784.2" y1="908" x2="1784.2" y2="938" stroke="#c0c0c0" stroke-width="0.8" opacity="0.35"/>
<circle cx="1677.4" cy="922.8" r="9.6" fill="url(#h1)"/>
<circle cx="1891" cy="922.8" r="9.6" fill="url(#h1)"/>
<text x="1677.2" y="927.8" font-size="15.5" fill="#383838" stroke="#383838" stroke-width="0.2" text-anchor="middle" >«</text>
<text x="1891.2" y="927.8" font-size="15.5" fill="#383838" stroke="#383838" stroke-width="0.2" text-anchor="middle" >»</text>
<text x="1704.4" y="930.3" font-size="21.5" fill="#303030" stroke="#303030" stroke-width="0.39" textLength="48.6" lengthAdjust="spacingAndGlyphs" >Back</text>
<text x="1811" y="930.3" font-size="21.5" fill="#303030" stroke="#303030" stroke-width="0.39" textLength="51" lengthAdjust="spacingAndGlyphs" >Next</text>
<rect x="1120" y="0" width="800" height="612" fill="#2c2c2c" />
<rect x="1120" y="2.5" width="800" height="608" fill="#202020" />
<rect x="1128.5" y="9" width="783.5" height="593.5" fill="#333333" />
<rect x="1163.6" y="35.6" width="743.8" height="535.3" fill="#242424" />
<text x="1520.5" y="29.6" font-size="16.6" fill="#cfcfcf" stroke="#cfcfcf" stroke-width="0.43" text-anchor="middle" textLength="88.5" lengthAdjust="spacingAndGlyphs" >CIE 1931 xy</text>
<line x1="1163.6" y1="570.9" x2="1163.6" y2="577.4" stroke="#b0b0b0" stroke-width="1.6" />
<text x="1162.1" y="595" font-size="16" fill="#cfcfcf" stroke="#cfcfcf" stroke-width="0.42" text-anchor="middle" textLength="9" lengthAdjust="spacingAndGlyphs" >0</text>
<line x1="1156.1" y1="570.75" x2="1163.6" y2="570.75" stroke="#a4a4a4" stroke-width="1.6" />
<text x="1155.8" y="577.75" font-size="16" fill="#cfcfcf" stroke="#cfcfcf" stroke-width="0.42" text-anchor="end" textLength="9" lengthAdjust="spacingAndGlyphs" >0</text>
<line x1="1251.15" y1="570.9" x2="1251.15" y2="577.4" stroke="#b0b0b0" stroke-width="1.6" />
<text x="1251.45" y="595" font-size="16" fill="#cfcfcf" stroke="#cfcfcf" stroke-width="0.42" text-anchor="middle" textLength="23.5" lengthAdjust="spacingAndGlyphs" >0.1</text>
<line x1="1156.1" y1="507.65" x2="1163.6" y2="507.65" stroke="#a4a4a4" stroke-width="1.6" />
<text x="1155.8" y="514.65" font-size="16" fill="#cfcfcf" stroke="#cfcfcf" stroke-width="0.42" text-anchor="end" textLength="23.5" lengthAdjust="spacingAndGlyphs" >0.1</text>
<line x1="1339.8" y1="570.9" x2="1339.8" y2="577.4" stroke="#b0b0b0" stroke-width="1.6" />
<text x="1340.1" y="595" font-size="16" fill="#cfcfcf" stroke="#cfcfcf" stroke-width="0.42" text-anchor="middle" textLength="23.5" lengthAdjust="spacingAndGlyphs" >0.2</text>
<line x1="1156.1" y1="443.95" x2="1163.6" y2="443.95" stroke="#a4a4a4" stroke-width="1.6" />
<text x="1155.8" y="450.95" font-size="16" fill="#cfcfcf" stroke="#cfcfcf" stroke-width="0.42" text-anchor="end" textLength="23.5" lengthAdjust="spacingAndGlyphs" >0.2</text>
<line x1="1428.45" y1="570.9" x2="1428.45" y2="577.4" stroke="#b0b0b0" stroke-width="1.6" />
<text x="1428.75" y="595" font-size="16" fill="#cfcfcf" stroke="#cfcfcf" stroke-width="0.42" text-anchor="middle" textLength="23.5" lengthAdjust="spacingAndGlyphs" >0.3</text>
<line x1="1156.1" y1="380.25" x2="1163.6" y2="380.25" stroke="#a4a4a4" stroke-width="1.6" />
<text x="1155.8" y="387.25" font-size="16" fill="#cfcfcf" stroke="#cfcfcf" stroke-width="0.42" text-anchor="end" textLength="23.5" lengthAdjust="spacingAndGlyphs" >0.3</text>
<line x1="1517.1" y1="570.9" x2="1517.1" y2="577.4" stroke="#b0b0b0" stroke-width="1.6" />
<text x="1517.4" y="595" font-size="16" fill="#cfcfcf" stroke="#cfcfcf" stroke-width="0.42" text-anchor="middle" textLength="23.5" lengthAdjust="spacingAndGlyphs" >0.4</text>
<line x1="1156.1" y1="316.55" x2="1163.6" y2="316.55" stroke="#a4a4a4" stroke-width="1.6" />
<text x="1155.8" y="323.55" font-size="16" fill="#cfcfcf" stroke="#cfcfcf" stroke-width="0.42" text-anchor="end" textLength="23.5" lengthAdjust="spacingAndGlyphs" >0.4</text>
<line x1="1605.75" y1="570.9" x2="1605.75" y2="577.4" stroke="#b0b0b0" stroke-width="1.6" />
<text x="1606.05" y="595" font-size="16" fill="#cfcfcf" stroke="#cfcfcf" stroke-width="0.42" text-anchor="middle" textLength="23.5" lengthAdjust="spacingAndGlyphs" >0.5</text>
<line x1="1156.1" y1="252.85" x2="1163.6" y2="252.85" stroke="#a4a4a4" stroke-width="1.6" />
<text x="1155.8" y="259.85" font-size="16" fill="#cfcfcf" stroke="#cfcfcf" stroke-width="0.42" text-anchor="end" textLength="23.5" lengthAdjust="spacingAndGlyphs" >0.5</text>
<line x1="1694.4" y1="570.9" x2="1694.4" y2="577.4" stroke="#b0b0b0" stroke-width="1.6" />
<text x="1694.7" y="595" font-size="16" fill="#cfcfcf" stroke="#cfcfcf" stroke-width="0.42" text-anchor="middle" textLength="23.5" lengthAdjust="spacingAndGlyphs" >0.6</text>
<line x1="1156.1" y1="189.15" x2="1163.6" y2="189.15" stroke="#a4a4a4" stroke-width="1.6" />
<text x="1155.8" y="196.15" font-size="16" fill="#cfcfcf" stroke="#cfcfcf" stroke-width="0.42" text-anchor="end" textLength="23.5" lengthAdjust="spacingAndGlyphs" >0.6</text>
<line x1="1783.05" y1="570.9" x2="1783.05" y2="577.4" stroke="#b0b0b0" stroke-width="1.6" />
<text x="1783.35" y="595" font-size="16" fill="#cfcfcf" stroke="#cfcfcf" stroke-width="0.42" text-anchor="middle" textLength="23.5" lengthAdjust="spacingAndGlyphs" >0.7</text>
<line x1="1156.1" y1="124.85" x2="1163.6" y2="124.85" stroke="#a4a4a4" stroke-width="1.6" />
<text x="1155.8" y="131.85" font-size="16" fill="#cfcfcf" stroke="#cfcfcf" stroke-width="0.42" text-anchor="end" textLength="23.5" lengthAdjust="spacingAndGlyphs" >0.7</text>
<line x1="1871.7" y1="570.9" x2="1871.7" y2="577.4" stroke="#b0b0b0" stroke-width="1.6" />
<text x="1872" y="595" font-size="16" fill="#cfcfcf" stroke="#cfcfcf" stroke-width="0.42" text-anchor="middle" textLength="23.5" lengthAdjust="spacingAndGlyphs" >0.8</text>
<line x1="1156.1" y1="61.15" x2="1163.6" y2="61.15" stroke="#a4a4a4" stroke-width="1.6" />
<text x="1155.8" y="68.15" font-size="16" fill="#cfcfcf" stroke="#cfcfcf" stroke-width="0.42" text-anchor="end" textLength="23.5" lengthAdjust="spacingAndGlyphs" >0.8</text>
</svg>
<div class="cie" id="c1"><div class="k0"></div><div class="k1 s"></div><div class="k2 s"></div><div class="dk"></div></div>
<div class="cie" id="c2"><div class="k0"></div><div class="k1 s"></div><div class="k2 s"></div></div>
<svg width="1920" height="938" viewBox="0 0 1920 938">
<rect x="1163.6" y="35.6" width="743.8" height="535.3" fill="none" stroke="#808080" stroke-width="1.9"/>
<rect x="1721.76" y="352.14" width="16.6" height="15.6" fill="none" stroke="#ffffff" stroke-width="1.8" opacity="0.85"/>
<rect x="1420.35" y="180.15" width="16.6" height="15.6" fill="none" stroke="#ffffff" stroke-width="1.8" opacity="0.85"/>
<rect x="1287.38" y="524.13" width="16.6" height="15.6" fill="none" stroke="#ffffff" stroke-width="1.8" opacity="0.85"/>
<rect x="1353.51" y="352.97" width="16.6" height="15.6" fill="none" stroke="#ffffff" stroke-width="1.8" opacity="0.85"/>
<rect x="1438.88" y="464.12" width="16.6" height="15.6" fill="none" stroke="#ffffff" stroke-width="1.8" opacity="0.85"/>
<rect x="1526.11" y="240.47" width="16.6" height="15.6" fill="none" stroke="#ffffff" stroke-width="1.8" opacity="0.85"/>
<rect x="1432.81" y="353.28" width="14.6" height="15.2" fill="rgba(255,255,255,0.45)" stroke="#1a1a1a" stroke-width="2.1" opacity="1"/>
<circle cx="1415.63" cy="381.88" r="3.9" fill="#c8c8c8" stroke="#1c2a2a" stroke-width="1.8" stroke-opacity="0.85"/>
<circle cx="1725.73" cy="356.21" r="3.9" fill="#c00010" stroke="#1c2a2a" stroke-width="1.8" stroke-opacity="0.85"/>
<circle cx="1443.29" cy="192.18" r="3.9" fill="#10b010" stroke="#1c2a2a" stroke-width="1.8" stroke-opacity="0.85"/>
<circle cx="1293.02" cy="535.84" r="3.9" fill="#1010c8" stroke="#1c2a2a" stroke-width="1.8" stroke-opacity="0.85"/>
<circle cx="1358.27" cy="386.47" r="3.9" fill="#10c0b0" stroke="#1c2a2a" stroke-width="1.8" stroke-opacity="0.85"/>
<circle cx="1399.23" cy="492.02" r="3.9" fill="#e010c0" stroke="#1c2a2a" stroke-width="1.8" stroke-opacity="0.85"/>
<circle cx="1528.21" cy="240.85" r="3.9" fill="#b0b010" stroke="#1c2a2a" stroke-width="1.8" stroke-opacity="0.85"/>
<circle cx="1417.13" cy="381.05" r="3.9" fill="#ffffff" stroke="#1c2a2a" stroke-width="1.8" stroke-opacity="0.85"/>
<rect x="1765.6" y="135.1" width="14.8" height="14.8" fill="rgba(255,255,255,0.4)" stroke="#1a1a1a" stroke-width="2" opacity="1"/>
<circle cx="1684.2" cy="233" r="4.4" fill="#d0d0d0" stroke="#404060" stroke-width="1.8" stroke-opacity="0.8"/>
<circle cx="1690.3" cy="229.2" r="4.4" fill="#ffffff" stroke="#404060" stroke-width="1.8" stroke-opacity="0.8"/>
<rect x="1613.7" y="536.3" width="290" height="28.7" fill="#2f2f2f" />
<text x="1614.5" y="558.8" font-size="23" fill="#f0f0f0" stroke="#f0f0f0" stroke-width="0.41" textLength="236" lengthAdjust="spacingAndGlyphs" xml:space="preserve">Gamut Coverage:  97%</text>
</svg>
</body></html>
